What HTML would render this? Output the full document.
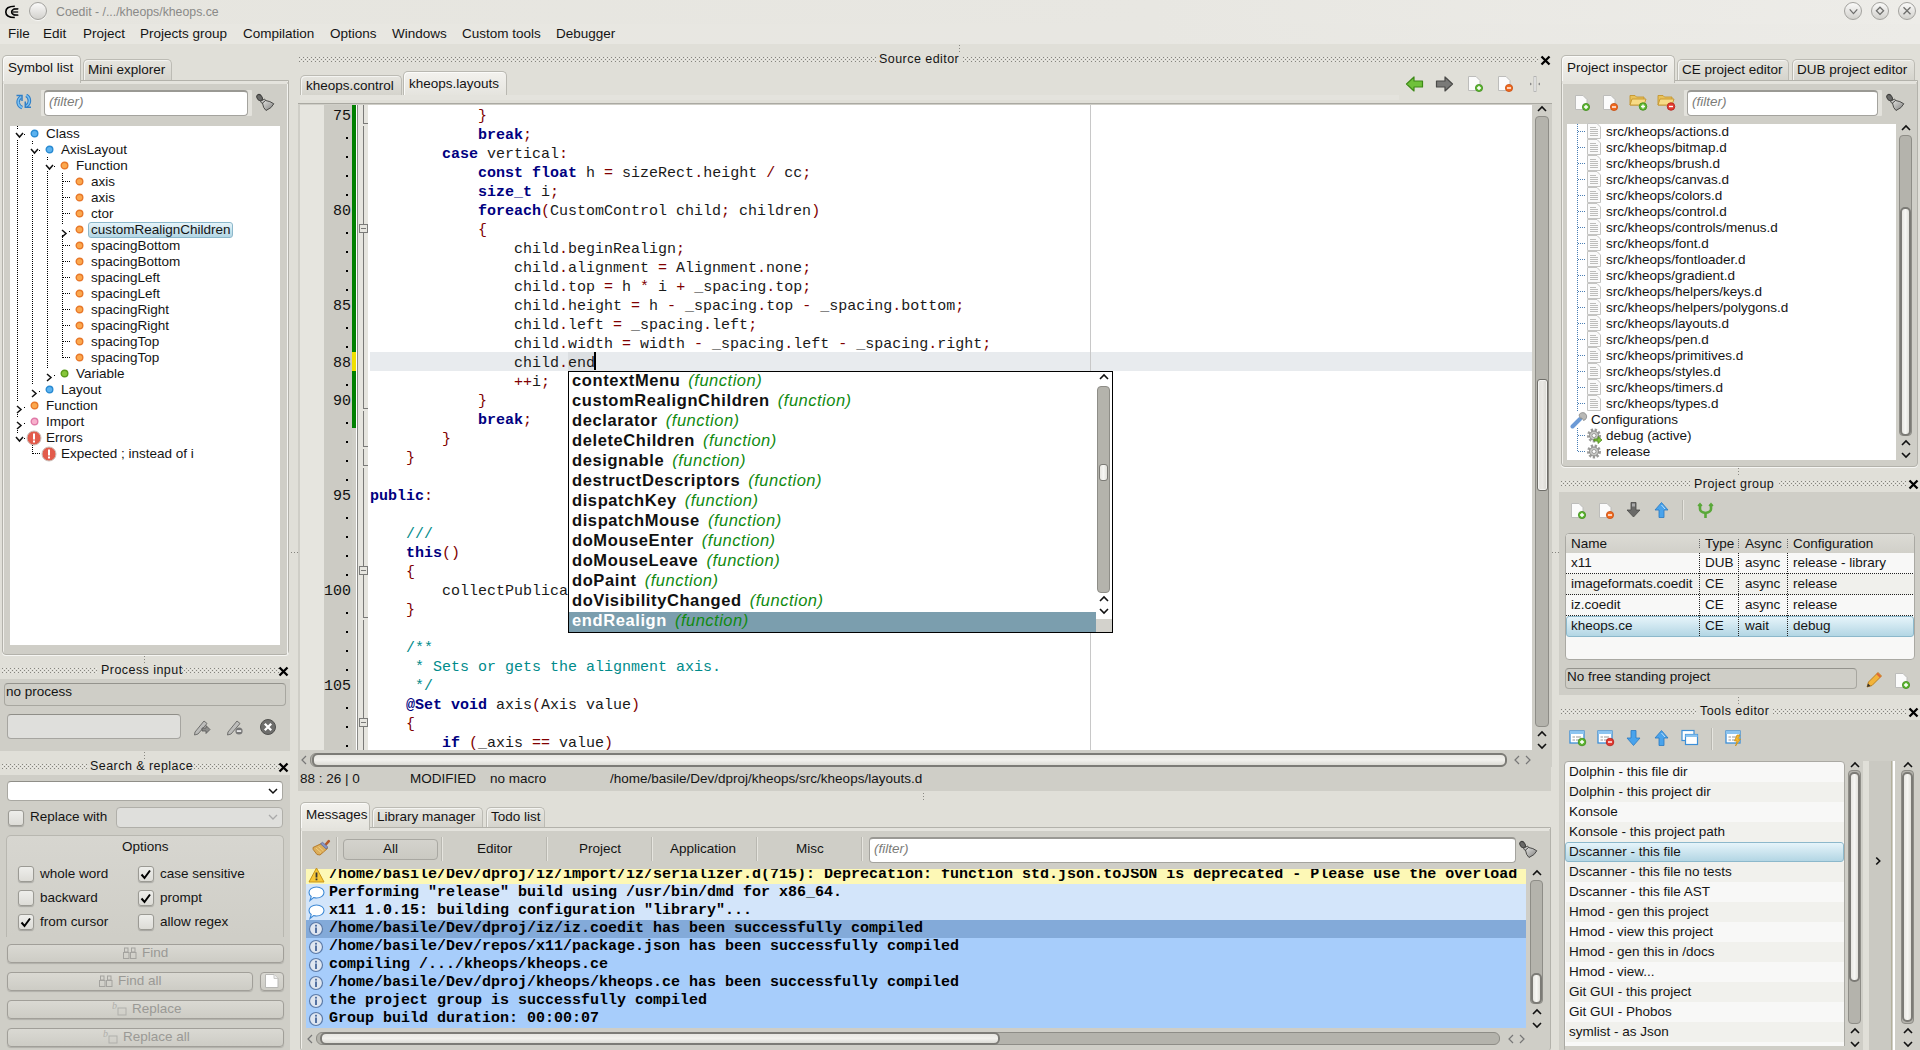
<!DOCTYPE html><html><head><meta charset="utf-8"><style>
html,body{margin:0;padding:0}
body{width:1920px;height:1050px;overflow:hidden;position:relative;background:#e0dfd8;font-family:"Liberation Sans",sans-serif;font-size:13.5px;color:#141414}
.m{font-family:"Liberation Mono",monospace}
</style></head><body>
<svg width="0" height="0" style="position:absolute"><defs>
<pattern id="dotpat" width="4" height="4" patternUnits="userSpaceOnUse"><rect x="0" y="0" width="1" height="1" fill="#8d8c86"/><rect x="1" y="1" width="1" height="1" fill="#f3f3ef"/><rect x="2" y="2" width="1" height="1" fill="#8d8c86"/><rect x="3" y="3" width="1" height="1" fill="#f3f3ef"/></pattern>
</defs></svg>

<div style="position:absolute;left:0px;top:0px;width:1920px;height:24px;background:linear-gradient(90deg,#e6e5df,#e8e7e2 60%,#edece8)"></div>
<div style="position:absolute;left:0px;top:24px;width:1920px;height:20px;background:linear-gradient(90deg,#e8e7e1,#e8e7e2 60%,#ecebe7)"></div>
<div style="position:absolute;left:56px;top:5px;white-space:pre;font-size:12.3px;line-height:15px;color:#8a8a88;">Coedit - /.../kheops/kheops.ce</div>
<svg style="position:absolute;left:0px;top:0px" width="24" height="24"><path d="M14.8 6.3 C7 6.3 5.8 9 5.8 11.9 C5.8 14.8 7 17.5 14.8 17.5" fill="none" stroke="#000" stroke-width="1.6"/><path d="M18.2 8.8 C12.5 8.8 11.6 10.2 11.6 12 C11.6 13.8 12.5 15.2 18.2 15.2" fill="none" stroke="#000" stroke-width="1.5"/><path d="M13.5 8.8 H18.2 M12 12 H18.2 M13.5 15.2 H18.2" stroke="#2a2a2a" stroke-width="1.4"/></svg>
<div style="position:absolute;left:29px;top:2px;width:16px;height:16px;border-radius:50%;background:linear-gradient(#fafaf9,#d2d1cd);border:1px solid #a3a29e;box-shadow:0 1px 1px rgba(255,255,255,.8)"></div>
<div style="position:absolute;left:1844px;top:2px;width:16px;height:16px;border-radius:50%;background:linear-gradient(#fafaf9,#d2d1cd);border:1px solid #a3a29e"></div>
<div style="position:absolute;left:1871px;top:2px;width:16px;height:16px;border-radius:50%;background:linear-gradient(#fafaf9,#d2d1cd);border:1px solid #a3a29e"></div>
<div style="position:absolute;left:1898px;top:2px;width:16px;height:16px;border-radius:50%;background:linear-gradient(#fafaf9,#d2d1cd);border:1px solid #a3a29e"></div>
<svg style="position:absolute;left:1840px;top:0px" width="80" height="24"><path d="M9.7 9.4 L13.5 13.6 L17.3 9.4" fill="none" stroke="#6e6e6c" stroke-width="1.3"/><path d="M40 7.2 L43.6 10.8 L40 14.4 L36.4 10.8 Z" fill="none" stroke="#6e6e6c" stroke-width="1.3"/><path d="M63.5 7.3 L70.5 14.3 M70.5 7.3 L63.5 14.3" stroke="#6e6e6c" stroke-width="1.3"/></svg>
<div style="position:absolute;left:8px;top:25px;white-space:pre;font-size:13.5px;line-height:17px;color:#141414;">File</div>
<div style="position:absolute;left:43px;top:25px;white-space:pre;font-size:13.5px;line-height:17px;color:#141414;">Edit</div>
<div style="position:absolute;left:83px;top:25px;white-space:pre;font-size:13.5px;line-height:17px;color:#141414;">Project</div>
<div style="position:absolute;left:140px;top:25px;white-space:pre;font-size:13.5px;line-height:17px;color:#141414;">Projects group</div>
<div style="position:absolute;left:243px;top:25px;white-space:pre;font-size:13.5px;line-height:17px;color:#141414;">Compilation</div>
<div style="position:absolute;left:330px;top:25px;white-space:pre;font-size:13.5px;line-height:17px;color:#141414;">Options</div>
<div style="position:absolute;left:392px;top:25px;white-space:pre;font-size:13.5px;line-height:17px;color:#141414;">Windows</div>
<div style="position:absolute;left:462px;top:25px;white-space:pre;font-size:13.5px;line-height:17px;color:#141414;">Custom tools</div>
<div style="position:absolute;left:556px;top:25px;white-space:pre;font-size:13.5px;line-height:17px;color:#141414;">Debugger</div>
<div style="position:absolute;left:83px;top:59px;width:87px;height:22px;background:linear-gradient(#e6e5df,#d3d2cb);border:1px solid #bcbbb4;border-bottom:none;border-radius:5px 5px 0 0;box-shadow:inset 1px 1px 0 #f4f4f1"></div>
<div style="position:absolute;left:88px;top:61px;white-space:pre;font-size:13.5px;line-height:17px;color:#141414;">Mini explorer</div>
<div style="position:absolute;left:2px;top:80px;width:285px;height:573px;background:#cfcec7;border:1px solid #b3b2ab;border-radius:0 0 4px 4px;box-shadow:inset 1px 1px 0 #f0efea, 0 1px 0 #f6f6f3"></div>
<div style="position:absolute;left:3px;top:81px;width:284px;height:3px;background:#e4e3dd"></div>
<div style="position:absolute;left:2px;top:55px;width:77px;height:27px;background:linear-gradient(#f3f2ee,#e4e3dd);border:1px solid #b9b8b1;border-bottom:none;border-radius:5px 5px 0 0;box-shadow:inset 1px 1px 0 #fbfbf9"></div>
<div style="position:absolute;left:8px;top:59px;white-space:pre;font-size:13.5px;line-height:17px;color:#141414;">Symbol list</div>
<div style="position:absolute;left:3px;top:81px;width:77px;height:3px;background:#e4e3dd"></div>
<svg style="position:absolute;left:16px;top:94px" width="16" height="16"><g fill="none" stroke="#2f7fc8" stroke-width="3.6"><path d="M4.8 3.2 Q1.8 5 2.2 9 Q2.8 12.3 6.2 13.6"/><path d="M10.2 1.4 Q13.4 3 13.4 7 Q13.2 10.4 10.5 11.8"/></g><g fill="none" stroke="#7cc2f2" stroke-width="1.5"><path d="M4.8 3.2 Q1.8 5 2.2 9 Q2.8 12.3 6.2 13.6"/><path d="M10.2 1.4 Q13.4 3 13.4 7 Q13.2 10.4 10.5 11.8"/></g><path d="M0.5 1.5 H6 V7" fill="none" stroke="#2f7fc8" stroke-width="1.5"/><path d="M9.3 7.5 V13.2 H15" fill="none" stroke="#2f7fc8" stroke-width="1.5"/></svg>
<div style="position:absolute;left:41px;top:90px;width:211px;height:26px;background:#e3e2dc;border-radius:1px"></div>
<div style="position:absolute;left:44px;top:90px;width:202px;height:24px;background:#fff;border:1px solid #a4a39e;border-top:2px solid #9a9994;border-radius:4px;box-sizing:border-box;width:204px;height:26px"></div>
<div style="position:absolute;left:49px;top:93px;white-space:pre;font-size:13.5px;line-height:17px;color:#7c7c79;font-style:italic">(filter)</div>
<svg style="position:absolute;left:254px;top:90px" width="26" height="24"><defs><linearGradient id="bg254" x1="0" y1="0" x2="1" y2="1"><stop offset="0" stop-color="#e2e2e0"/><stop offset=".5" stop-color="#b0b0ae"/><stop offset="1" stop-color="#7a7a78"/></linearGradient></defs><ellipse cx="5.6" cy="7.6" rx="2.4" ry="3.4" transform="rotate(-35 5.6 7.6)" fill="#6a6a68" stroke="#3e3e3c" stroke-width="1"/><path d="M6.5 11.5 L10.5 9 L12 11 L8 13.5 Z" fill="#cfcfcd" stroke="#3e3e3c" stroke-width=".9"/><path d="M8.5 13 L11.5 10.5 Q16 11 19.8 13.8 Q18 18 12 20.5 Q9 18 8.5 13 Z" fill="url(#bg254)" stroke="#4a4a48" stroke-width="1"/></svg>
<div style="position:absolute;left:10px;top:126px;width:270px;height:519px;background:#fff"></div>
<div style="position:absolute;left:17px;top:126px;width:1px;height:312px;background:repeating-linear-gradient(#000 0 1px,transparent 1px 2px)"></div>
<div style="position:absolute;left:32px;top:141px;width:1px;height:249px;background:repeating-linear-gradient(#000 0 1px,transparent 1px 2px)"></div>
<div style="position:absolute;left:47px;top:157px;width:1px;height:217px;background:repeating-linear-gradient(#000 0 1px,transparent 1px 2px)"></div>
<div style="position:absolute;left:62px;top:173px;width:1px;height:185px;background:repeating-linear-gradient(#000 0 1px,transparent 1px 2px)"></div>
<div style="position:absolute;left:32px;top:445px;width:1px;height:9px;background:repeating-linear-gradient(#000 0 1px,transparent 1px 2px)"></div>
<div style="position:absolute;left:15px;top:129px;width:10px;height:10px;background:#fff"></div>
<svg style="position:absolute;left:15px;top:132px" width="9" height="7"><path d="M1 1 L4.5 5 L8 1" fill="none" stroke="#111" stroke-width="1.5"/></svg>
<div style="position:absolute;left:24px;top:134px;width:1px;height:1px;background:#000"></div>
<svg style="position:absolute;left:30px;top:129px" width="10" height="10"><circle cx="4.5" cy="4.5" r="3.3" fill="#5cb2ef" stroke="#2a8bd2" stroke-width="1.4"/></svg>
<div style="position:absolute;left:46px;top:125px;white-space:pre;font-size:13.5px;line-height:17px;color:#141414;">Class</div>
<div style="position:absolute;left:30px;top:145px;width:10px;height:10px;background:#fff"></div>
<svg style="position:absolute;left:30px;top:148px" width="9" height="7"><path d="M1 1 L4.5 5 L8 1" fill="none" stroke="#111" stroke-width="1.5"/></svg>
<div style="position:absolute;left:39px;top:150px;width:1px;height:1px;background:#000"></div>
<svg style="position:absolute;left:45px;top:145px" width="10" height="10"><circle cx="4.5" cy="4.5" r="3.3" fill="#5cb2ef" stroke="#2a8bd2" stroke-width="1.4"/></svg>
<div style="position:absolute;left:61px;top:141px;white-space:pre;font-size:13.5px;line-height:17px;color:#141414;">AxisLayout</div>
<div style="position:absolute;left:45px;top:161px;width:10px;height:10px;background:#fff"></div>
<svg style="position:absolute;left:45px;top:164px" width="9" height="7"><path d="M1 1 L4.5 5 L8 1" fill="none" stroke="#111" stroke-width="1.5"/></svg>
<div style="position:absolute;left:54px;top:166px;width:1px;height:1px;background:#000"></div>
<svg style="position:absolute;left:60px;top:161px" width="10" height="10"><circle cx="4.5" cy="4.5" r="3.3" fill="#fba84e" stroke="#e8782a" stroke-width="1.4"/></svg>
<div style="position:absolute;left:76px;top:157px;white-space:pre;font-size:13.5px;line-height:17px;color:#141414;">Function</div>
<div style="position:absolute;left:63px;top:181px;width:8px;height:1px;background:repeating-linear-gradient(90deg,#000 0 1px,transparent 1px 2px)"></div>
<svg style="position:absolute;left:75px;top:177px" width="10" height="10"><circle cx="4.5" cy="4.5" r="3.3" fill="#fba84e" stroke="#e8782a" stroke-width="1.4"/></svg>
<div style="position:absolute;left:91px;top:173px;white-space:pre;font-size:13.5px;line-height:17px;color:#141414;">axis</div>
<div style="position:absolute;left:63px;top:197px;width:8px;height:1px;background:repeating-linear-gradient(90deg,#000 0 1px,transparent 1px 2px)"></div>
<svg style="position:absolute;left:75px;top:193px" width="10" height="10"><circle cx="4.5" cy="4.5" r="3.3" fill="#fba84e" stroke="#e8782a" stroke-width="1.4"/></svg>
<div style="position:absolute;left:91px;top:189px;white-space:pre;font-size:13.5px;line-height:17px;color:#141414;">axis</div>
<div style="position:absolute;left:63px;top:213px;width:8px;height:1px;background:repeating-linear-gradient(90deg,#000 0 1px,transparent 1px 2px)"></div>
<svg style="position:absolute;left:75px;top:209px" width="10" height="10"><circle cx="4.5" cy="4.5" r="3.3" fill="#fba84e" stroke="#e8782a" stroke-width="1.4"/></svg>
<div style="position:absolute;left:91px;top:205px;white-space:pre;font-size:13.5px;line-height:17px;color:#141414;">ctor</div>
<div style="position:absolute;left:60px;top:225px;width:10px;height:10px;background:#fff"></div>
<svg style="position:absolute;left:61px;top:229px" width="7" height="9"><path d="M1 1 L5 4.5 L1 8" fill="none" stroke="#111" stroke-width="1.5"/></svg>
<div style="position:absolute;left:69px;top:231px;width:1px;height:1px;background:#000"></div>
<svg style="position:absolute;left:75px;top:225px" width="10" height="10"><circle cx="4.5" cy="4.5" r="3.3" fill="#fba84e" stroke="#e8782a" stroke-width="1.4"/></svg>
<div style="position:absolute;left:88px;top:222px;width:145px;height:16px;background:linear-gradient(#e6f4fa,#b3d6e4);border:1px solid #8cb8cb;border-radius:3px;box-sizing:border-box"></div>
<div style="position:absolute;left:91px;top:221px;white-space:pre;font-size:13.5px;line-height:17px;color:#141414;">customRealignChildren</div>
<div style="position:absolute;left:63px;top:245px;width:8px;height:1px;background:repeating-linear-gradient(90deg,#000 0 1px,transparent 1px 2px)"></div>
<svg style="position:absolute;left:75px;top:241px" width="10" height="10"><circle cx="4.5" cy="4.5" r="3.3" fill="#fba84e" stroke="#e8782a" stroke-width="1.4"/></svg>
<div style="position:absolute;left:91px;top:237px;white-space:pre;font-size:13.5px;line-height:17px;color:#141414;">spacingBottom</div>
<div style="position:absolute;left:63px;top:261px;width:8px;height:1px;background:repeating-linear-gradient(90deg,#000 0 1px,transparent 1px 2px)"></div>
<svg style="position:absolute;left:75px;top:257px" width="10" height="10"><circle cx="4.5" cy="4.5" r="3.3" fill="#fba84e" stroke="#e8782a" stroke-width="1.4"/></svg>
<div style="position:absolute;left:91px;top:253px;white-space:pre;font-size:13.5px;line-height:17px;color:#141414;">spacingBottom</div>
<div style="position:absolute;left:63px;top:277px;width:8px;height:1px;background:repeating-linear-gradient(90deg,#000 0 1px,transparent 1px 2px)"></div>
<svg style="position:absolute;left:75px;top:273px" width="10" height="10"><circle cx="4.5" cy="4.5" r="3.3" fill="#fba84e" stroke="#e8782a" stroke-width="1.4"/></svg>
<div style="position:absolute;left:91px;top:269px;white-space:pre;font-size:13.5px;line-height:17px;color:#141414;">spacingLeft</div>
<div style="position:absolute;left:63px;top:293px;width:8px;height:1px;background:repeating-linear-gradient(90deg,#000 0 1px,transparent 1px 2px)"></div>
<svg style="position:absolute;left:75px;top:289px" width="10" height="10"><circle cx="4.5" cy="4.5" r="3.3" fill="#fba84e" stroke="#e8782a" stroke-width="1.4"/></svg>
<div style="position:absolute;left:91px;top:285px;white-space:pre;font-size:13.5px;line-height:17px;color:#141414;">spacingLeft</div>
<div style="position:absolute;left:63px;top:309px;width:8px;height:1px;background:repeating-linear-gradient(90deg,#000 0 1px,transparent 1px 2px)"></div>
<svg style="position:absolute;left:75px;top:305px" width="10" height="10"><circle cx="4.5" cy="4.5" r="3.3" fill="#fba84e" stroke="#e8782a" stroke-width="1.4"/></svg>
<div style="position:absolute;left:91px;top:301px;white-space:pre;font-size:13.5px;line-height:17px;color:#141414;">spacingRight</div>
<div style="position:absolute;left:63px;top:325px;width:8px;height:1px;background:repeating-linear-gradient(90deg,#000 0 1px,transparent 1px 2px)"></div>
<svg style="position:absolute;left:75px;top:321px" width="10" height="10"><circle cx="4.5" cy="4.5" r="3.3" fill="#fba84e" stroke="#e8782a" stroke-width="1.4"/></svg>
<div style="position:absolute;left:91px;top:317px;white-space:pre;font-size:13.5px;line-height:17px;color:#141414;">spacingRight</div>
<div style="position:absolute;left:63px;top:341px;width:8px;height:1px;background:repeating-linear-gradient(90deg,#000 0 1px,transparent 1px 2px)"></div>
<svg style="position:absolute;left:75px;top:337px" width="10" height="10"><circle cx="4.5" cy="4.5" r="3.3" fill="#fba84e" stroke="#e8782a" stroke-width="1.4"/></svg>
<div style="position:absolute;left:91px;top:333px;white-space:pre;font-size:13.5px;line-height:17px;color:#141414;">spacingTop</div>
<div style="position:absolute;left:63px;top:357px;width:8px;height:1px;background:repeating-linear-gradient(90deg,#000 0 1px,transparent 1px 2px)"></div>
<svg style="position:absolute;left:75px;top:353px" width="10" height="10"><circle cx="4.5" cy="4.5" r="3.3" fill="#fba84e" stroke="#e8782a" stroke-width="1.4"/></svg>
<div style="position:absolute;left:91px;top:349px;white-space:pre;font-size:13.5px;line-height:17px;color:#141414;">spacingTop</div>
<div style="position:absolute;left:45px;top:369px;width:10px;height:10px;background:#fff"></div>
<svg style="position:absolute;left:46px;top:373px" width="7" height="9"><path d="M1 1 L5 4.5 L1 8" fill="none" stroke="#111" stroke-width="1.5"/></svg>
<div style="position:absolute;left:54px;top:375px;width:1px;height:1px;background:#000"></div>
<svg style="position:absolute;left:60px;top:369px" width="10" height="10"><circle cx="4.5" cy="4.5" r="3.3" fill="#86c63a" stroke="#5a9a1c" stroke-width="1.4"/></svg>
<div style="position:absolute;left:76px;top:365px;white-space:pre;font-size:13.5px;line-height:17px;color:#141414;">Variable</div>
<div style="position:absolute;left:30px;top:385px;width:10px;height:10px;background:#fff"></div>
<svg style="position:absolute;left:31px;top:389px" width="7" height="9"><path d="M1 1 L5 4.5 L1 8" fill="none" stroke="#111" stroke-width="1.5"/></svg>
<div style="position:absolute;left:39px;top:391px;width:1px;height:1px;background:#000"></div>
<svg style="position:absolute;left:45px;top:385px" width="10" height="10"><circle cx="4.5" cy="4.5" r="3.3" fill="#5cb2ef" stroke="#2a8bd2" stroke-width="1.4"/></svg>
<div style="position:absolute;left:61px;top:381px;white-space:pre;font-size:13.5px;line-height:17px;color:#141414;">Layout</div>
<div style="position:absolute;left:15px;top:401px;width:10px;height:10px;background:#fff"></div>
<svg style="position:absolute;left:16px;top:405px" width="7" height="9"><path d="M1 1 L5 4.5 L1 8" fill="none" stroke="#111" stroke-width="1.5"/></svg>
<div style="position:absolute;left:24px;top:407px;width:1px;height:1px;background:#000"></div>
<svg style="position:absolute;left:30px;top:401px" width="10" height="10"><circle cx="4.5" cy="4.5" r="3.3" fill="#fba84e" stroke="#e8782a" stroke-width="1.4"/></svg>
<div style="position:absolute;left:46px;top:397px;white-space:pre;font-size:13.5px;line-height:17px;color:#141414;">Function</div>
<div style="position:absolute;left:15px;top:417px;width:10px;height:10px;background:#fff"></div>
<svg style="position:absolute;left:16px;top:421px" width="7" height="9"><path d="M1 1 L5 4.5 L1 8" fill="none" stroke="#111" stroke-width="1.5"/></svg>
<div style="position:absolute;left:24px;top:423px;width:1px;height:1px;background:#000"></div>
<svg style="position:absolute;left:30px;top:417px" width="10" height="10"><circle cx="4.5" cy="4.5" r="3.3" fill="#f7b0cc" stroke="#e07aa8" stroke-width="1.4"/></svg>
<div style="position:absolute;left:46px;top:413px;white-space:pre;font-size:13.5px;line-height:17px;color:#141414;">Import</div>
<div style="position:absolute;left:15px;top:433px;width:10px;height:10px;background:#fff"></div>
<svg style="position:absolute;left:15px;top:436px" width="9" height="7"><path d="M1 1 L4.5 5 L8 1" fill="none" stroke="#111" stroke-width="1.5"/></svg>
<div style="position:absolute;left:24px;top:438px;width:1px;height:1px;background:#000"></div>
<svg style="position:absolute;left:26px;top:430px" width="16" height="16"><circle cx="8" cy="8" r="7" fill="#e25b4b" stroke="#c9c2bd" stroke-width="1"/><rect x="7" y="3.5" width="2" height="6" fill="#fff"/><rect x="7" y="10.5" width="2" height="2" fill="#fff"/></svg>
<div style="position:absolute;left:46px;top:429px;white-space:pre;font-size:13.5px;line-height:17px;color:#141414;">Errors</div>
<div style="position:absolute;left:33px;top:453px;width:8px;height:1px;background:repeating-linear-gradient(90deg,#000 0 1px,transparent 1px 2px)"></div>
<svg style="position:absolute;left:41px;top:446px" width="16" height="16"><circle cx="8" cy="8" r="7" fill="#e25b4b" stroke="#c9c2bd" stroke-width="1"/><rect x="7" y="3.5" width="2" height="6" fill="#fff"/><rect x="7" y="10.5" width="2" height="2" fill="#fff"/></svg>
<div style="position:absolute;left:61px;top:445px;white-space:pre;font-size:13.5px;line-height:17px;color:#141414;">Expected ; instead of i</div>
<svg style="position:absolute;left:144px;top:656px" width="3" height="8"><rect x="0" y="0" width="1" height="1" fill="#8a8983"/><rect x="0" y="3" width="1" height="1" fill="#8a8983"/><rect x="0" y="6" width="1" height="1" fill="#8a8983"/></svg>
<svg style="position:absolute;left:2px;top:668px" width="277" height="6"><defs><pattern id="dp1" width="4" height="4" patternUnits="userSpaceOnUse"><rect x="0" y="0" width="1" height="1" fill="#85847e"/><rect x="2" y="0" width="1" height="1" fill="#eeede9"/><rect x="2" y="2" width="1" height="1" fill="#85847e"/><rect x="0" y="2" width="1" height="1" fill="#eeede9"/></pattern></defs><rect width="277" height="5" fill="url(#dp1)"/></svg>
<div style="position:absolute;left:98px;top:663px;width:83px;height:16px;background:#e0dfd8"></div>
<div style="position:absolute;left:101px;top:663px;white-space:pre;font-size:12.5px;line-height:15px;color:#141414;letter-spacing:0.45px">Process input</div>
<svg style="position:absolute;left:278px;top:666px" width="11" height="11"><path d="M1.5 1.5 L9.5 9.5 M9.5 1.5 L1.5 9.5" stroke="#000" stroke-width="2.3"/></svg>
<div style="position:absolute;left:0px;top:679px;width:290px;height:72px;background:#cfcec7"></div>
<div style="position:absolute;left:4px;top:683px;width:280px;height:21px;background:#cfcec7;border:1px solid #a8a7a0;border-top-color:#94938d;border-radius:4px"></div>
<div style="position:absolute;left:6px;top:683px;white-space:pre;font-size:13.5px;line-height:17px;color:#141414;">no process</div>
<div style="position:absolute;left:7px;top:714px;width:172px;height:23px;background:#dfdfdc;border:1px solid #a6a5a0;border-top-color:#8f8e88;border-radius:4px"></div>
<svg style="position:absolute;left:193px;top:718px" width="18" height="18"><path d="M2 14 L11 3 L14 5.5 L5 16 L1.5 17 Z" fill="#bdbdbb" stroke="#6f6f6d" stroke-width="1"/><path d="M9 10 H13 V7.5 L17 11.5 L13 15.5 V13 H9 Z" fill="#8b8b89" stroke="#555" stroke-width=".8"/></svg>
<svg style="position:absolute;left:226px;top:718px" width="18" height="18"><path d="M2 14 L11 3 L14 5.5 L5 16 L1.5 17 Z" fill="#bdbdbb" stroke="#6f6f6d" stroke-width="1"/><circle cx="13" cy="13" r="3.6" fill="#777"/><rect x="10.8" y="12.3" width="4.4" height="1.5" fill="#fff"/></svg>
<svg style="position:absolute;left:259px;top:718px" width="18" height="18"><circle cx="9" cy="9" r="7.5" fill="#6e6e6c" stroke="#4f4f4d"/><path d="M5.8 5.8 L12.2 12.2 M12.2 5.8 L5.8 12.2" stroke="#fff" stroke-width="2.3"/></svg>
<svg style="position:absolute;left:144px;top:752px" width="3" height="8"><rect x="0" y="0" width="1" height="1" fill="#8a8983"/><rect x="0" y="3" width="1" height="1" fill="#8a8983"/><rect x="0" y="6" width="1" height="1" fill="#8a8983"/></svg>
<svg style="position:absolute;left:2px;top:764px" width="277" height="6"><defs><pattern id="dp2" width="4" height="4" patternUnits="userSpaceOnUse"><rect x="0" y="0" width="1" height="1" fill="#85847e"/><rect x="2" y="0" width="1" height="1" fill="#eeede9"/><rect x="2" y="2" width="1" height="1" fill="#85847e"/><rect x="0" y="2" width="1" height="1" fill="#eeede9"/></pattern></defs><rect width="277" height="5" fill="url(#dp2)"/></svg>
<div style="position:absolute;left:87px;top:759px;width:105px;height:16px;background:#e0dfd8"></div>
<div style="position:absolute;left:90px;top:759px;white-space:pre;font-size:12.5px;line-height:15px;color:#141414;letter-spacing:0.45px">Search &amp; replace</div>
<svg style="position:absolute;left:278px;top:762px" width="11" height="11"><path d="M1.5 1.5 L9.5 9.5 M9.5 1.5 L1.5 9.5" stroke="#000" stroke-width="2.3"/></svg>
<div style="position:absolute;left:0px;top:775px;width:290px;height:275px;background:#cfcec7"></div>
<div style="position:absolute;left:7px;top:781px;width:274px;height:18px;background:#fff;border:1px solid #a9a8a2;border-top-color:#8f8e88;border-radius:4px"></div>
<svg style="position:absolute;left:265px;top:783px;overflow:visible" width="16" height="16"><g transform="translate(8 8)"><path d="M-4 -2.0 L0 2.0 L4 -2.0" fill="none" stroke="#111" stroke-width="1.5"/></g></svg>
<div style="position:absolute;left:8px;top:810px;width:14px;height:14px;background:linear-gradient(#eeeeeb,#dddcd7);border:1px solid #9b9a94;border-radius:3px;box-shadow:0 1px 1px rgba(0,0,0,.2)"></div>
<div style="position:absolute;left:30px;top:808px;white-space:pre;font-size:13.5px;line-height:17px;color:#141414;">Replace with</div>
<div style="position:absolute;left:116px;top:807px;width:165px;height:19px;background:#dfdfdc;border:1px solid #b0afa9;border-radius:4px"></div>
<svg style="position:absolute;left:265px;top:809px;overflow:visible" width="16" height="16"><g transform="translate(8 8)"><path d="M-4 -2.0 L0 2.0 L4 -2.0" fill="none" stroke="#aaa" stroke-width="1.3"/></g></svg>
<div style="position:absolute;left:6px;top:835px;width:276px;height:101px;background:linear-gradient(#d7d6d0,#cfcec7);border:1px solid #b8b7b0;border-bottom:none;border-radius:5px 5px 0 0"></div>
<div style="position:absolute;left:122px;top:838px;white-space:pre;font-size:13.5px;line-height:17px;color:#141414;">Options</div>
<div style="position:absolute;left:18px;top:866px;width:14px;height:14px;background:linear-gradient(#eeeeeb,#dddcd7);border:1px solid #9b9a94;border-radius:3px;box-shadow:0 1px 1px rgba(0,0,0,.2)"></div>
<div style="position:absolute;left:40px;top:865px;white-space:pre;font-size:13.5px;line-height:17px;color:#141414;">whole word</div>
<div style="position:absolute;left:138px;top:866px;width:14px;height:14px;background:linear-gradient(#eeeeeb,#dddcd7);border:1px solid #9b9a94;border-radius:3px;box-shadow:0 1px 1px rgba(0,0,0,.2)"></div>
<svg style="position:absolute;left:140px;top:869px" width="12" height="11"><path d="M1.5 5.5 L4.5 9 L10 1.5" fill="none" stroke="#000" stroke-width="2"/></svg>
<div style="position:absolute;left:160px;top:865px;white-space:pre;font-size:13.5px;line-height:17px;color:#141414;">case sensitive</div>
<div style="position:absolute;left:18px;top:890px;width:14px;height:14px;background:linear-gradient(#eeeeeb,#dddcd7);border:1px solid #9b9a94;border-radius:3px;box-shadow:0 1px 1px rgba(0,0,0,.2)"></div>
<div style="position:absolute;left:40px;top:889px;white-space:pre;font-size:13.5px;line-height:17px;color:#141414;">backward</div>
<div style="position:absolute;left:138px;top:890px;width:14px;height:14px;background:linear-gradient(#eeeeeb,#dddcd7);border:1px solid #9b9a94;border-radius:3px;box-shadow:0 1px 1px rgba(0,0,0,.2)"></div>
<svg style="position:absolute;left:140px;top:893px" width="12" height="11"><path d="M1.5 5.5 L4.5 9 L10 1.5" fill="none" stroke="#000" stroke-width="2"/></svg>
<div style="position:absolute;left:160px;top:889px;white-space:pre;font-size:13.5px;line-height:17px;color:#141414;">prompt</div>
<div style="position:absolute;left:18px;top:914px;width:14px;height:14px;background:linear-gradient(#eeeeeb,#dddcd7);border:1px solid #9b9a94;border-radius:3px;box-shadow:0 1px 1px rgba(0,0,0,.2)"></div>
<svg style="position:absolute;left:20px;top:917px" width="12" height="11"><path d="M1.5 5.5 L4.5 9 L10 1.5" fill="none" stroke="#000" stroke-width="2"/></svg>
<div style="position:absolute;left:40px;top:913px;white-space:pre;font-size:13.5px;line-height:17px;color:#141414;">from cursor</div>
<div style="position:absolute;left:138px;top:914px;width:14px;height:14px;background:linear-gradient(#eeeeeb,#dddcd7);border:1px solid #9b9a94;border-radius:3px;box-shadow:0 1px 1px rgba(0,0,0,.2)"></div>
<div style="position:absolute;left:160px;top:913px;white-space:pre;font-size:13.5px;line-height:17px;color:#141414;">allow regex</div>
<div style="position:absolute;left:7px;top:944px;width:275px;height:17px;background:linear-gradient(#dad9d3,#cdccc5);border:1px solid #a19f99;border-radius:4px;box-shadow:0 1px 1px rgba(0,0,0,.15)"></div>
<div style="position:absolute;left:142px;top:944px;white-space:pre;font-size:13.5px;line-height:17px;color:#9a9995;">Find</div>
<div style="position:absolute;left:7px;top:972px;width:244px;height:17px;background:linear-gradient(#dad9d3,#cdccc5);border:1px solid #a19f99;border-radius:4px;box-shadow:0 1px 1px rgba(0,0,0,.15)"></div>
<div style="position:absolute;left:118px;top:972px;white-space:pre;font-size:13.5px;line-height:17px;color:#9a9995;">Find all</div>
<div style="position:absolute;left:260px;top:972px;width:22px;height:17px;background:linear-gradient(#dad9d3,#cdccc5);border:1px solid #a19f99;border-radius:4px;box-shadow:0 1px 1px rgba(0,0,0,.15)"></div>
<svg style="position:absolute;left:264px;top:973px" width="16" height="16"><path d="M1.5 1.5 H10 L14 5.5 V14.5 H1.5 Z" fill="#fff" stroke="#b8b8b5"/><path d="M10 1.5 V5.5 H14" fill="#eee" stroke="#c8c8c5"/></svg>
<div style="position:absolute;left:7px;top:1000px;width:275px;height:17px;background:linear-gradient(#dad9d3,#cdccc5);border:1px solid #a19f99;border-radius:4px;box-shadow:0 1px 1px rgba(0,0,0,.15)"></div>
<div style="position:absolute;left:132px;top:1000px;white-space:pre;font-size:13.5px;line-height:17px;color:#9a9995;">Replace</div>
<div style="position:absolute;left:7px;top:1028px;width:275px;height:17px;background:linear-gradient(#dad9d3,#cdccc5);border:1px solid #a19f99;border-radius:4px;box-shadow:0 1px 1px rgba(0,0,0,.15)"></div>
<div style="position:absolute;left:123px;top:1028px;white-space:pre;font-size:13.5px;line-height:17px;color:#9a9995;">Replace all</div>
<svg style="position:absolute;left:123px;top:947px" width="14" height="12"><rect x=".5" y="5.5" width="5.5" height="6" fill="none" stroke="#a4a39f"/><rect x="7.5" y="5.5" width="5.5" height="6" fill="none" stroke="#a4a39f"/><rect x="1.5" y="1" width="3.5" height="4" fill="none" stroke="#a4a39f"/><rect x="8.5" y="1" width="3.5" height="4" fill="none" stroke="#a4a39f"/></svg>
<svg style="position:absolute;left:99px;top:975px" width="14" height="12"><rect x=".5" y="5.5" width="5.5" height="6" fill="none" stroke="#a4a39f"/><rect x="7.5" y="5.5" width="5.5" height="6" fill="none" stroke="#a4a39f"/><rect x="1.5" y="1" width="3.5" height="4" fill="none" stroke="#a4a39f"/><rect x="8.5" y="1" width="3.5" height="4" fill="none" stroke="#a4a39f"/></svg>
<svg style="position:absolute;left:112px;top:1001px" width="16" height="16"><text x="0" y="8" font-family="Liberation Serif" font-style="italic" font-size="10" fill="#b0afab">b</text><rect x="6" y="7" width="8" height="7" fill="none" stroke="#b0afab"/></svg>
<svg style="position:absolute;left:103px;top:1029px" width="16" height="16"><text x="0" y="8" font-family="Liberation Serif" font-style="italic" font-size="10" fill="#b0afab">b</text><rect x="6" y="7" width="8" height="7" fill="none" stroke="#b0afab"/></svg>
<svg style="position:absolute;left:959px;top:45px" width="3" height="8"><rect x="0" y="0" width="1" height="1" fill="#8a8983"/><rect x="0" y="3" width="1" height="1" fill="#8a8983"/><rect x="0" y="6" width="1" height="1" fill="#8a8983"/></svg>
<svg style="position:absolute;left:299px;top:57px" width="1239" height="6"><defs><pattern id="dp3" width="4" height="4" patternUnits="userSpaceOnUse"><rect x="0" y="0" width="1" height="1" fill="#85847e"/><rect x="2" y="0" width="1" height="1" fill="#eeede9"/><rect x="2" y="2" width="1" height="1" fill="#85847e"/><rect x="0" y="2" width="1" height="1" fill="#eeede9"/></pattern></defs><rect width="1239" height="5" fill="url(#dp3)"/></svg>
<div style="position:absolute;left:876px;top:52px;width:87px;height:16px;background:#e0dfd8"></div>
<div style="position:absolute;left:879px;top:52px;white-space:pre;font-size:12.5px;line-height:15px;color:#141414;letter-spacing:0.45px">Source editor</div>
<svg style="position:absolute;left:1540px;top:55px" width="11" height="11"><path d="M1.5 1.5 L9.5 9.5 M9.5 1.5 L1.5 9.5" stroke="#000" stroke-width="2.3"/></svg>
<div style="position:absolute;left:300px;top:75px;width:100px;height:21px;background:linear-gradient(#e6e5df,#d3d2cb);border:1px solid #bcbbb4;border-bottom:none;border-radius:5px 5px 0 0;box-shadow:inset 1px 1px 0 #f4f4f1"></div>
<div style="position:absolute;left:306px;top:77px;white-space:pre;font-size:13.5px;line-height:17px;color:#141414;">kheops.control</div>
<div style="position:absolute;left:403px;top:71px;width:102px;height:25px;background:linear-gradient(#f3f2ee,#e4e3dd);border:1px solid #b9b8b1;border-bottom:none;border-radius:5px 5px 0 0;box-shadow:inset 1px 1px 0 #fbfbf9"></div>
<div style="position:absolute;left:409px;top:75px;white-space:pre;font-size:13.5px;line-height:17px;color:#141414;">kheops.layouts</div>
<div style="position:absolute;left:300px;top:95px;width:1099px;height:5px;background:#e4e3dd"></div>
<svg style="position:absolute;left:1405px;top:75px" width="20" height="18"><path d="M1.5 9 L9 2 V6 H17.5 V12 H9 V16 Z" fill="#6fc13a" stroke="#3d8a17" stroke-width="1.2" stroke-linejoin="round"/></svg>
<svg style="position:absolute;left:1434px;top:75px" width="20" height="18"><path d="M18.5 9 L11 2 V6 H2.5 V12 H11 V16 Z" fill="#7a7a78" stroke="#4a4a48" stroke-width="1.2" stroke-linejoin="round"/></svg>
<svg style="position:absolute;left:1467px;top:75px" width="17" height="17"><path d="M1.5 1.5 H9 L13 5.5 V15.5 H1.5 Z" fill="#fbfbfb" stroke="#bdbdbb" stroke-width="1"/><circle cx="12" cy="13" r="3.6" fill="#5fb832" stroke="#3e8a1c" stroke-width=".8"/><path d="M10 13 H14 M12 11 V15" stroke="#fff" stroke-width="1.4"/></svg>
<svg style="position:absolute;left:1497px;top:75px" width="17" height="17"><path d="M1.5 1.5 H9 L13 5.5 V15.5 H1.5 Z" fill="#fbfbfb" stroke="#bdbdbb" stroke-width="1"/><circle cx="12" cy="13" r="3.6" fill="#f06a1f" stroke="#c54d10" stroke-width=".8"/><path d="M10 13 H14" stroke="#fff" stroke-width="1.4"/></svg>
<svg style="position:absolute;left:1529px;top:75px" width="12" height="18"><rect x="5" y="1.5" width="2" height="15" fill="#fff" stroke="#aaa" stroke-width=".8"/><path d="M3 9 L1 7.5 V10.5 Z M9 9 L11 7.5 V10.5 Z" fill="#888"/></svg>
<div style="position:absolute;left:298px;top:103px;width:1254px;height:664px;background:#cfcec7;border-top:1px solid #aaa9a2;box-sizing:border-box"></div>
<div style="position:absolute;left:300px;top:105px;width:24px;height:645px;background:#e6e5df"></div>
<div style="position:absolute;left:324px;top:105px;width:28px;height:645px;background:#cccbc4"></div>
<div style="position:absolute;left:352px;top:105px;width:4px;height:247px;background:#008000"></div>
<div style="position:absolute;left:352px;top:352px;width:4px;height:19px;background:#f0e000"></div>
<div style="position:absolute;left:352px;top:371px;width:4px;height:57px;background:#008000"></div>
<div style="position:absolute;left:356px;top:105px;width:1px;height:645px;background:#fff"></div>
<div style="position:absolute;left:357px;top:105px;width:1px;height:645px;background:#8a8a87"></div>
<div style="position:absolute;left:358px;top:105px;width:10px;height:645px;background:#e6e5df"></div>
<div style="position:absolute;left:368px;top:105px;width:1164px;height:645px;background:#fff"></div>
<div style="position:absolute;left:370px;top:352px;width:1162px;height:19px;background:#e8ebee"></div>
<div style="position:absolute;left:568px;top:352px;width:26px;height:19px;background:#dcdfe2"></div>
<div style="position:absolute;left:1090px;top:105px;width:1px;height:645px;background:#c8c8c8"></div>
<div style="position:absolute;left:363px;top:105px;width:1px;height:18px;background:#7a7a78"></div>
<div style="position:absolute;left:363px;top:126px;width:1px;height:98px;background:#7a7a78"></div>
<div style="position:absolute;left:363px;top:233px;width:1px;height:175px;background:#7a7a78"></div>
<div style="position:absolute;left:363px;top:411px;width:1px;height:35px;background:#7a7a78"></div>
<div style="position:absolute;left:363px;top:449px;width:1px;height:16px;background:#7a7a78"></div>
<div style="position:absolute;left:363px;top:468px;width:1px;height:98px;background:#7a7a78"></div>
<div style="position:absolute;left:363px;top:575px;width:1px;height:42px;background:#7a7a78"></div>
<div style="position:absolute;left:363px;top:620px;width:1px;height:98px;background:#7a7a78"></div>
<div style="position:absolute;left:363px;top:727px;width:1px;height:23px;background:#7a7a78"></div>
<div style="position:absolute;left:363px;top:123px;width:5px;height:1px;background:#7a7a78"></div>
<div style="position:absolute;left:363px;top:408px;width:5px;height:1px;background:#7a7a78"></div>
<div style="position:absolute;left:363px;top:446px;width:5px;height:1px;background:#7a7a78"></div>
<div style="position:absolute;left:363px;top:465px;width:5px;height:1px;background:#7a7a78"></div>
<div style="position:absolute;left:363px;top:617px;width:5px;height:1px;background:#7a7a78"></div>
<div style="position:absolute;left:359px;top:224px;width:9px;height:9px;background:#e6e5df;border:1px solid #7a7a78;box-sizing:border-box"></div>
<div style="position:absolute;left:361px;top:228px;width:5px;height:1px;background:#7a7a78"></div>
<div style="position:absolute;left:359px;top:566px;width:9px;height:9px;background:#e6e5df;border:1px solid #7a7a78;box-sizing:border-box"></div>
<div style="position:absolute;left:361px;top:570px;width:5px;height:1px;background:#7a7a78"></div>
<div style="position:absolute;left:359px;top:718px;width:9px;height:9px;background:#e6e5df;border:1px solid #7a7a78;box-sizing:border-box"></div>
<div style="position:absolute;left:361px;top:722px;width:5px;height:1px;background:#7a7a78"></div>
<div class="m" style="position:absolute;left:370px;top:107px;width:1162px;height:643px;overflow:hidden;font-size:15px;line-height:19px;color:#1a1a1a;white-space:pre"><div style="height:19px">            <span style="color:#800000">}</span></div><div style="height:19px">            <b style="color:#000080">break</b><span style="color:#800000">;</span></div><div style="height:19px">        <b style="color:#000080">case</b> vertical<span style="color:#800000">:</span></div><div style="height:19px">            <b style="color:#000080">const</b> <b style="color:#000080">float</b> h <span style="color:#800000">=</span> sizeRect<span style="color:#800000">.</span>height <span style="color:#800000">/</span> cc<span style="color:#800000">;</span></div><div style="height:19px">            <b style="color:#000080">size_t</b> i<span style="color:#800000">;</span></div><div style="height:19px">            <b style="color:#000080">foreach</b><span style="color:#800000">(</span>CustomControl child<span style="color:#800000">;</span> children<span style="color:#800000">)</span></div><div style="height:19px">            <span style="color:#800000">{</span></div><div style="height:19px">                child<span style="color:#800000">.</span>beginRealign<span style="color:#800000">;</span></div><div style="height:19px">                child<span style="color:#800000">.</span>alignment <span style="color:#800000">=</span> Alignment<span style="color:#800000">.</span>none<span style="color:#800000">;</span></div><div style="height:19px">                child<span style="color:#800000">.</span>top <span style="color:#800000">=</span> h <span style="color:#800000">*</span> i <span style="color:#800000">+</span> _spacing<span style="color:#800000">.</span>top<span style="color:#800000">;</span></div><div style="height:19px">                child<span style="color:#800000">.</span>height <span style="color:#800000">=</span> h <span style="color:#800000">-</span> _spacing<span style="color:#800000">.</span>top <span style="color:#800000">-</span> _spacing<span style="color:#800000">.</span>bottom<span style="color:#800000">;</span></div><div style="height:19px">                child<span style="color:#800000">.</span>left <span style="color:#800000">=</span> _spacing<span style="color:#800000">.</span>left<span style="color:#800000">;</span></div><div style="height:19px">                child<span style="color:#800000">.</span>width <span style="color:#800000">=</span> width <span style="color:#800000">-</span> _spacing<span style="color:#800000">.</span>left <span style="color:#800000">-</span> _spacing<span style="color:#800000">.</span>right<span style="color:#800000">;</span></div><div style="height:19px">                child<span style="color:#800000">.</span>end</div><div style="height:19px">                <span style="color:#800000">++</span>i<span style="color:#800000">;</span></div><div style="height:19px">            <span style="color:#800000">}</span></div><div style="height:19px">            <b style="color:#000080">break</b><span style="color:#800000">;</span></div><div style="height:19px">        <span style="color:#800000">}</span></div><div style="height:19px">    <span style="color:#800000">}</span></div><div style="height:19px"></div><div style="height:19px"><b style="color:#000080">public</b><span style="color:#800000">:</span></div><div style="height:19px"></div><div style="height:19px"><span style="color:#008b8b">    ///</span></div><div style="height:19px">    <b style="color:#000080">this</b><span style="color:#800000">(</span><span style="color:#800000">)</span></div><div style="height:19px">    <span style="color:#800000">{</span></div><div style="height:19px">        collectPublications<span style="color:#800000">;</span></div><div style="height:19px">    <span style="color:#800000">}</span></div><div style="height:19px"></div><div style="height:19px"><span style="color:#008b8b">    /**</span></div><div style="height:19px"><span style="color:#008b8b">     * Sets or gets the alignment axis.</span></div><div style="height:19px"><span style="color:#008b8b">     */</span></div><div style="height:19px">    <b style="color:#000080">@Set</b> <b style="color:#000080">void</b> axis<span style="color:#800000">(</span>Axis value<span style="color:#800000">)</span></div><div style="height:19px">    <span style="color:#800000">{</span></div><div style="height:19px">        <b style="color:#000080">if</b> <span style="color:#800000">(</span>_axis <span style="color:#800000">==</span> value<span style="color:#800000">)</span></div></div>
<div style="position:absolute;left:594px;top:352px;width:2px;height:18px;background:#000"></div>
<div style="position:absolute;left:346px;top:137px;width:2px;height:2px;background:#000"></div>
<div style="position:absolute;left:346px;top:156px;width:2px;height:2px;background:#000"></div>
<div style="position:absolute;left:346px;top:175px;width:2px;height:2px;background:#000"></div>
<div style="position:absolute;left:346px;top:194px;width:2px;height:2px;background:#000"></div>
<div style="position:absolute;left:346px;top:232px;width:2px;height:2px;background:#000"></div>
<div style="position:absolute;left:346px;top:251px;width:2px;height:2px;background:#000"></div>
<div style="position:absolute;left:346px;top:270px;width:2px;height:2px;background:#000"></div>
<div style="position:absolute;left:346px;top:289px;width:2px;height:2px;background:#000"></div>
<div style="position:absolute;left:346px;top:327px;width:2px;height:2px;background:#000"></div>
<div style="position:absolute;left:346px;top:346px;width:2px;height:2px;background:#000"></div>
<div style="position:absolute;left:346px;top:384px;width:2px;height:2px;background:#000"></div>
<div style="position:absolute;left:346px;top:422px;width:2px;height:2px;background:#000"></div>
<div style="position:absolute;left:346px;top:441px;width:2px;height:2px;background:#000"></div>
<div style="position:absolute;left:346px;top:460px;width:2px;height:2px;background:#000"></div>
<div style="position:absolute;left:346px;top:479px;width:2px;height:2px;background:#000"></div>
<div style="position:absolute;left:346px;top:517px;width:2px;height:2px;background:#000"></div>
<div style="position:absolute;left:346px;top:536px;width:2px;height:2px;background:#000"></div>
<div style="position:absolute;left:346px;top:555px;width:2px;height:2px;background:#000"></div>
<div style="position:absolute;left:346px;top:574px;width:2px;height:2px;background:#000"></div>
<div style="position:absolute;left:346px;top:612px;width:2px;height:2px;background:#000"></div>
<div style="position:absolute;left:346px;top:631px;width:2px;height:2px;background:#000"></div>
<div style="position:absolute;left:346px;top:650px;width:2px;height:2px;background:#000"></div>
<div style="position:absolute;left:346px;top:669px;width:2px;height:2px;background:#000"></div>
<div style="position:absolute;left:346px;top:707px;width:2px;height:2px;background:#000"></div>
<div style="position:absolute;left:346px;top:726px;width:2px;height:2px;background:#000"></div>
<div style="position:absolute;left:346px;top:745px;width:2px;height:2px;background:#000"></div>
<div class="m" style="position:absolute;left:300px;top:107px;width:51px;height:643px;overflow:hidden;font-size:15px;line-height:19px;color:#111;white-space:pre"><div style="position:absolute;right:0px;width:60px"><div style="height:19px;text-align:right">75</div><div style="height:19px"></div><div style="height:19px"></div><div style="height:19px"></div><div style="height:19px"></div><div style="height:19px;text-align:right">80</div><div style="height:19px"></div><div style="height:19px"></div><div style="height:19px"></div><div style="height:19px"></div><div style="height:19px;text-align:right">85</div><div style="height:19px"></div><div style="height:19px"></div><div style="height:19px;text-align:right">88</div><div style="height:19px"></div><div style="height:19px;text-align:right">90</div><div style="height:19px"></div><div style="height:19px"></div><div style="height:19px"></div><div style="height:19px"></div><div style="height:19px;text-align:right">95</div><div style="height:19px"></div><div style="height:19px"></div><div style="height:19px"></div><div style="height:19px"></div><div style="height:19px;text-align:right">100</div><div style="height:19px"></div><div style="height:19px"></div><div style="height:19px"></div><div style="height:19px"></div><div style="height:19px;text-align:right">105</div><div style="height:19px"></div><div style="height:19px"></div><div style="height:19px"></div></div></div>
<svg style="position:absolute;left:1534.0px;top:101px;overflow:visible" width="16" height="16"><g transform="translate(8 8)"><path d="M-4 2.0 L0 -2.0 L4 2.0" fill="none" stroke="#111" stroke-width="1.6"/></g></svg>
<div style="position:absolute;left:1535px;top:116px;width:14px;height:611px;background:#b4b3ac;border:1px solid #8e8d87;border-radius:4px;box-sizing:border-box"></div>
<svg style="position:absolute;left:1534.0px;top:726px;overflow:visible" width="16" height="16"><g transform="translate(8 8)"><path d="M-4 2.0 L0 -2.0 L4 2.0" fill="none" stroke="#111" stroke-width="1.6"/></g></svg>
<svg style="position:absolute;left:1534.0px;top:738px;overflow:visible" width="16" height="16"><g transform="translate(8 8)"><path d="M-4 -2.0 L0 2.0 L4 -2.0" fill="none" stroke="#111" stroke-width="1.6"/></g></svg>
<div style="position:absolute;left:1537px;top:379px;width:11px;height:112px;background:linear-gradient(90deg,#e2e1dc,#e9e8e4 50%,#d9d8d2);border:1px solid #6f6e69;border-radius:3px;box-sizing:border-box;box-shadow:inset 0 0 0 1px #f3f3f0"></div>
<svg style="position:absolute;left:296px;top:752.0px;overflow:visible" width="16" height="16"><g transform="translate(8 8)"><path d="M2.0 -4 L-2.0 0 L2.0 4" fill="none" stroke="#777" stroke-width="1.2"/></g></svg>
<div style="position:absolute;left:310px;top:753px;width:1196px;height:14px;background:#b4b3ac;border:1px solid #8e8d87;border-radius:6px;box-sizing:border-box"></div>
<div style="position:absolute;left:312px;top:753px;width:1195px;height:14px;background:linear-gradient(#e8e7e2,#f2f1ed,#dcdbd5);border:2px solid #7c7b76;border-radius:6px;box-sizing:border-box"></div>
<svg style="position:absolute;left:1509px;top:752.0px;overflow:visible" width="16" height="16"><g transform="translate(8 8)"><path d="M2.0 -4 L-2.0 0 L2.0 4" fill="none" stroke="#777" stroke-width="1.2"/></g></svg>
<svg style="position:absolute;left:1520px;top:752.0px;overflow:visible" width="16" height="16"><g transform="translate(8 8)"><path d="M-2.0 -4 L2.0 0 L-2.0 4" fill="none" stroke="#777" stroke-width="1.2"/></g></svg>
<div style="position:absolute;left:298px;top:767px;width:1253px;height:24px;background:#cfcec7"></div>
<div style="position:absolute;left:300px;top:770px;white-space:pre;font-size:13.5px;line-height:17px;color:#141414;">88 : 26 | 0</div>
<div style="position:absolute;left:410px;top:770px;white-space:pre;font-size:13.5px;line-height:17px;color:#141414;">MODIFIED</div>
<div style="position:absolute;left:490px;top:770px;white-space:pre;font-size:13.5px;line-height:17px;color:#141414;">no macro</div>
<div style="position:absolute;left:610px;top:770px;white-space:pre;font-size:13.5px;line-height:17px;color:#141414;">/home/basile/Dev/dproj/kheops/src/kheops/layouts.d</div>
<div style="position:absolute;left:568px;top:371px;width:545px;height:262px;background:#fff;border:1px solid #000;box-sizing:border-box"></div>
<div style="position:absolute;left:569px;top:612px;width:527px;height:20px;background:#7b9eae"></div>
<div style="position:absolute;left:572px;top:370px;white-space:pre;font-size:16.5px;line-height:20px;color:#111"><b style="letter-spacing:0.6px">contextMenu</b><i style="color:#118a11;letter-spacing:0.5px;margin-left:8px">(function)</i></div>
<div style="position:absolute;left:572px;top:390px;white-space:pre;font-size:16.5px;line-height:20px;color:#111"><b style="letter-spacing:0.6px">customRealignChildren</b><i style="color:#118a11;letter-spacing:0.5px;margin-left:8px">(function)</i></div>
<div style="position:absolute;left:572px;top:410px;white-space:pre;font-size:16.5px;line-height:20px;color:#111"><b style="letter-spacing:0.6px">declarator</b><i style="color:#118a11;letter-spacing:0.5px;margin-left:8px">(function)</i></div>
<div style="position:absolute;left:572px;top:430px;white-space:pre;font-size:16.5px;line-height:20px;color:#111"><b style="letter-spacing:0.6px">deleteChildren</b><i style="color:#118a11;letter-spacing:0.5px;margin-left:8px">(function)</i></div>
<div style="position:absolute;left:572px;top:450px;white-space:pre;font-size:16.5px;line-height:20px;color:#111"><b style="letter-spacing:0.6px">designable</b><i style="color:#118a11;letter-spacing:0.5px;margin-left:8px">(function)</i></div>
<div style="position:absolute;left:572px;top:470px;white-space:pre;font-size:16.5px;line-height:20px;color:#111"><b style="letter-spacing:0.6px">destructDescriptors</b><i style="color:#118a11;letter-spacing:0.5px;margin-left:8px">(function)</i></div>
<div style="position:absolute;left:572px;top:490px;white-space:pre;font-size:16.5px;line-height:20px;color:#111"><b style="letter-spacing:0.6px">dispatchKey</b><i style="color:#118a11;letter-spacing:0.5px;margin-left:8px">(function)</i></div>
<div style="position:absolute;left:572px;top:510px;white-space:pre;font-size:16.5px;line-height:20px;color:#111"><b style="letter-spacing:0.6px">dispatchMouse</b><i style="color:#118a11;letter-spacing:0.5px;margin-left:8px">(function)</i></div>
<div style="position:absolute;left:572px;top:530px;white-space:pre;font-size:16.5px;line-height:20px;color:#111"><b style="letter-spacing:0.6px">doMouseEnter</b><i style="color:#118a11;letter-spacing:0.5px;margin-left:8px">(function)</i></div>
<div style="position:absolute;left:572px;top:550px;white-space:pre;font-size:16.5px;line-height:20px;color:#111"><b style="letter-spacing:0.6px">doMouseLeave</b><i style="color:#118a11;letter-spacing:0.5px;margin-left:8px">(function)</i></div>
<div style="position:absolute;left:572px;top:570px;white-space:pre;font-size:16.5px;line-height:20px;color:#111"><b style="letter-spacing:0.6px">doPaint</b><i style="color:#118a11;letter-spacing:0.5px;margin-left:8px">(function)</i></div>
<div style="position:absolute;left:572px;top:590px;white-space:pre;font-size:16.5px;line-height:20px;color:#111"><b style="letter-spacing:0.6px">doVisibilityChanged</b><i style="color:#118a11;letter-spacing:0.5px;margin-left:8px">(function)</i></div>
<div style="position:absolute;left:572px;top:610px;white-space:pre;font-size:16.5px;line-height:20px;color:#fff"><b style="letter-spacing:0.6px">endRealign</b><i style="color:#118a11;letter-spacing:0.5px;margin-left:8px">(function)</i></div>
<svg style="position:absolute;left:1095.5px;top:369px;overflow:visible" width="16" height="16"><g transform="translate(8 8)"><path d="M-4 2.0 L0 -2.0 L4 2.0" fill="none" stroke="#111" stroke-width="1.6"/></g></svg>
<div style="position:absolute;left:1097px;top:386px;width:13px;height:207px;background:#b4b3ac;border:1px solid #8e8d87;border-radius:4px;box-sizing:border-box"></div>
<svg style="position:absolute;left:1095.5px;top:591px;overflow:visible" width="16" height="16"><g transform="translate(8 8)"><path d="M-4 2.0 L0 -2.0 L4 2.0" fill="none" stroke="#111" stroke-width="1.6"/></g></svg>
<svg style="position:absolute;left:1095.5px;top:603px;overflow:visible" width="16" height="16"><g transform="translate(8 8)"><path d="M-4 -2.0 L0 2.0 L4 -2.0" fill="none" stroke="#111" stroke-width="1.6"/></g></svg>
<div style="position:absolute;left:1099px;top:464px;width:9px;height:17px;background:linear-gradient(90deg,#e8e7e2,#f6f6f3,#e2e1db);border:1px solid #7c7b76;border-radius:3px;box-sizing:border-box"></div>
<div style="position:absolute;left:1096px;top:619px;width:16px;height:13px;background:#d3d2cc"></div>
<svg style="position:absolute;left:923px;top:793px" width="3" height="8"><rect x="0" y="0" width="1" height="1" fill="#8a8983"/><rect x="0" y="3" width="1" height="1" fill="#8a8983"/><rect x="0" y="6" width="1" height="1" fill="#8a8983"/></svg>
<div style="position:absolute;left:372px;top:807px;width:109px;height:21px;background:linear-gradient(#e6e5df,#d3d2cb);border:1px solid #bcbbb4;border-bottom:none;border-radius:5px 5px 0 0;box-shadow:inset 1px 1px 0 #f4f4f1"></div>
<div style="position:absolute;left:377px;top:808px;white-space:pre;font-size:13.5px;line-height:17px;color:#141414;">Library manager</div>
<div style="position:absolute;left:486px;top:807px;width:57px;height:21px;background:linear-gradient(#e6e5df,#d3d2cb);border:1px solid #bcbbb4;border-bottom:none;border-radius:5px 5px 0 0;box-shadow:inset 1px 1px 0 #f4f4f1"></div>
<div style="position:absolute;left:491px;top:808px;white-space:pre;font-size:13.5px;line-height:17px;color:#141414;">Todo list</div>
<div style="position:absolute;left:300px;top:827px;width:1249px;height:223px;background:#cfcec7;border:1px solid #b3b2ab;border-radius:0 0 4px 4px;box-shadow:inset 1px 1px 0 #f0efea, 0 1px 0 #f6f6f3"></div>
<div style="position:absolute;left:301px;top:828px;width:1248px;height:3px;background:#e4e3dd"></div>
<div style="position:absolute;left:300px;top:802px;width:68px;height:27px;background:linear-gradient(#f3f2ee,#e4e3dd);border:1px solid #b9b8b1;border-bottom:none;border-radius:5px 5px 0 0;box-shadow:inset 1px 1px 0 #fbfbf9"></div>
<div style="position:absolute;left:306px;top:806px;white-space:pre;font-size:13.5px;line-height:17px;color:#141414;">Messages</div>
<div style="position:absolute;left:301px;top:828px;width:68px;height:3px;background:#e4e3dd"></div>
<svg style="position:absolute;left:306px;top:834px" width="30" height="28"><path d="M22.8 7.2 L19.8 10.5" stroke="#b4592a" stroke-width="2.6" stroke-linecap="round"/><path d="M7 13.5 L15.5 9.5 L21.5 14.5 L14 21 L11 20.5 L7.2 15.5 Z" fill="#dcae5a" stroke="#b77d2c" stroke-width="1"/><path d="M10 14 L15 18.5 M12.5 12.5 L17.5 17" stroke="#f0cd80" stroke-width="1"/><path d="M14.5 9.8 L16.5 8.3 L21.8 13 L20.2 15 Z" fill="#8a95c2" stroke="#5e6a9a" stroke-width=".8"/></svg>
<div style="position:absolute;left:336px;top:837px;width:1px;height:24px;background:#b9b8b1;box-shadow:1px 0 0 #e6e5df"></div>
<div style="position:absolute;left:343px;top:839px;width:93px;height:19px;background:linear-gradient(#d4d3cd,#cac9c2);border:1px solid #a9a8a2;border-radius:4px"></div>
<div style="position:absolute;left:383px;top:840px;white-space:pre;font-size:13.5px;line-height:17px;color:#141414;">All</div>
<div style="position:absolute;left:441px;top:837px;width:1px;height:24px;background:#b9b8b1;box-shadow:1px 0 0 #e6e5df"></div>
<div style="position:absolute;left:546px;top:837px;width:1px;height:24px;background:#b9b8b1;box-shadow:1px 0 0 #e6e5df"></div>
<div style="position:absolute;left:651px;top:837px;width:1px;height:24px;background:#b9b8b1;box-shadow:1px 0 0 #e6e5df"></div>
<div style="position:absolute;left:756px;top:837px;width:1px;height:24px;background:#b9b8b1;box-shadow:1px 0 0 #e6e5df"></div>
<div style="position:absolute;left:861px;top:837px;width:1px;height:24px;background:#b9b8b1;box-shadow:1px 0 0 #e6e5df"></div>
<div style="position:absolute;left:477px;top:840px;white-space:pre;font-size:13.5px;line-height:17px;color:#141414;">Editor</div>
<div style="position:absolute;left:579px;top:840px;white-space:pre;font-size:13.5px;line-height:17px;color:#141414;">Project</div>
<div style="position:absolute;left:670px;top:840px;white-space:pre;font-size:13.5px;line-height:17px;color:#141414;">Application</div>
<div style="position:absolute;left:796px;top:840px;white-space:pre;font-size:13.5px;line-height:17px;color:#141414;">Misc</div>
<div style="position:absolute;left:869px;top:837px;width:645px;height:24px;background:#fff;border:1px solid #a4a39e;border-top:2px solid #9a9994;border-radius:4px;box-sizing:border-box;width:647px;height:26px"></div>
<div style="position:absolute;left:874px;top:840px;white-space:pre;font-size:13.5px;line-height:17px;color:#7c7c79;font-style:italic">(filter)</div>
<svg style="position:absolute;left:1517px;top:837px" width="26" height="24"><defs><linearGradient id="bg1517" x1="0" y1="0" x2="1" y2="1"><stop offset="0" stop-color="#e2e2e0"/><stop offset=".5" stop-color="#b0b0ae"/><stop offset="1" stop-color="#7a7a78"/></linearGradient></defs><ellipse cx="5.6" cy="7.6" rx="2.4" ry="3.4" transform="rotate(-35 5.6 7.6)" fill="#6a6a68" stroke="#3e3e3c" stroke-width="1"/><path d="M6.5 11.5 L10.5 9 L12 11 L8 13.5 Z" fill="#cfcfcd" stroke="#3e3e3c" stroke-width=".9"/><path d="M8.5 13 L11.5 10.5 Q16 11 19.8 13.8 Q18 18 12 20.5 Q9 18 8.5 13 Z" fill="url(#bg1517)" stroke="#4a4a48" stroke-width="1"/></svg>
<div style="position:absolute;left:306px;top:869px;width:1220px;height:159px;background:#a7cdfb"></div>
<div style="position:absolute;left:306px;top:869px;width:1220px;height:15px;background:#fdf8b6"></div>
<div style="position:absolute;left:306px;top:884px;width:1220px;height:36px;background:#d3e5fa"></div>
<div style="position:absolute;left:306px;top:920px;width:1220px;height:18px;background:#83aad9"></div>
<div class="m" style="position:absolute;left:329px;top:869px;width:1197px;height:159px;overflow:hidden;font-size:15px;line-height:18px;font-weight:bold;color:#000;white-space:pre"><div style="position:relative;top:-3px"><div style="height:18px">/home/basile/Dev/dproj/iz/import/iz/serializer.d(715): Deprecation: function std.json.toJSON is deprecated - Please use the overload</div><div style="height:18px">Performing &quot;release&quot; build using /usr/bin/dmd for x86_64.</div><div style="height:18px">x11 1.0.15: building configuration &quot;library&quot;...</div><div style="height:18px">/home/basile/Dev/dproj/iz/iz.coedit has been successfully compiled</div><div style="height:18px">/home/basile/Dev/repos/x11/package.json has been successfully compiled</div><div style="height:18px">compiling /.../kheops/kheops.ce</div><div style="height:18px">/home/basile/Dev/dproj/kheops/kheops.ce has been successfully compiled</div><div style="height:18px">the project group is successfully compiled</div><div style="height:18px">Group build duration: 00:00:07</div></div></div>
<svg style="position:absolute;left:308px;top:867px" width="17" height="16"><path d="M8.5 1 L16 15 H1 Z" fill="#f7c83a" stroke="#c89416" stroke-width="1"/><rect x="7.6" y="5.5" width="1.8" height="5" fill="#333"/><rect x="7.6" y="11.5" width="1.8" height="1.8" fill="#333"/></svg>
<svg style="position:absolute;left:308px;top:885px" width="17" height="17"><path d="M8.5 2 C13 2 16 4.5 16 7.5 C16 10.5 13 13 8.5 13 C7.5 13 6.5 12.8 5.6 12.5 L2 15.5 L3.2 11.5 C1.8 10.5 1 9 1 7.5 C1 4.5 4 2 8.5 2 Z" fill="#fff" stroke="#3f8ad6" stroke-width="1.1"/></svg>
<svg style="position:absolute;left:308px;top:903px" width="17" height="17"><path d="M8.5 2 C13 2 16 4.5 16 7.5 C16 10.5 13 13 8.5 13 C7.5 13 6.5 12.8 5.6 12.5 L2 15.5 L3.2 11.5 C1.8 10.5 1 9 1 7.5 C1 4.5 4 2 8.5 2 Z" fill="#fff" stroke="#3f8ad6" stroke-width="1.1"/></svg>
<svg style="position:absolute;left:308px;top:921px" width="16" height="16"><circle cx="8" cy="8" r="6.5" fill="#dfe6f0" stroke="#5b7aa8" stroke-width="1.2"/><rect x="7.1" y="6.5" width="1.8" height="5.5" fill="#46659a"/><rect x="7.1" y="3.8" width="1.8" height="1.8" fill="#46659a"/></svg>
<svg style="position:absolute;left:308px;top:939px" width="16" height="16"><circle cx="8" cy="8" r="6.5" fill="#dfe6f0" stroke="#5b7aa8" stroke-width="1.2"/><rect x="7.1" y="6.5" width="1.8" height="5.5" fill="#46659a"/><rect x="7.1" y="3.8" width="1.8" height="1.8" fill="#46659a"/></svg>
<svg style="position:absolute;left:308px;top:957px" width="16" height="16"><circle cx="8" cy="8" r="6.5" fill="#dfe6f0" stroke="#5b7aa8" stroke-width="1.2"/><rect x="7.1" y="6.5" width="1.8" height="5.5" fill="#46659a"/><rect x="7.1" y="3.8" width="1.8" height="1.8" fill="#46659a"/></svg>
<svg style="position:absolute;left:308px;top:975px" width="16" height="16"><circle cx="8" cy="8" r="6.5" fill="#dfe6f0" stroke="#5b7aa8" stroke-width="1.2"/><rect x="7.1" y="6.5" width="1.8" height="5.5" fill="#46659a"/><rect x="7.1" y="3.8" width="1.8" height="1.8" fill="#46659a"/></svg>
<svg style="position:absolute;left:308px;top:993px" width="16" height="16"><circle cx="8" cy="8" r="6.5" fill="#dfe6f0" stroke="#5b7aa8" stroke-width="1.2"/><rect x="7.1" y="6.5" width="1.8" height="5.5" fill="#46659a"/><rect x="7.1" y="3.8" width="1.8" height="1.8" fill="#46659a"/></svg>
<svg style="position:absolute;left:308px;top:1011px" width="16" height="16"><circle cx="8" cy="8" r="6.5" fill="#dfe6f0" stroke="#5b7aa8" stroke-width="1.2"/><rect x="7.1" y="6.5" width="1.8" height="5.5" fill="#46659a"/><rect x="7.1" y="3.8" width="1.8" height="1.8" fill="#46659a"/></svg>
<svg style="position:absolute;left:1528.5px;top:865px;overflow:visible" width="16" height="16"><g transform="translate(8 8)"><path d="M-4 2.0 L0 -2.0 L4 2.0" fill="none" stroke="#111" stroke-width="1.6"/></g></svg>
<div style="position:absolute;left:1530px;top:880px;width:13px;height:124px;background:#b4b3ac;border:1px solid #8e8d87;border-radius:4px;box-sizing:border-box"></div>
<svg style="position:absolute;left:1528.5px;top:1004px;overflow:visible" width="16" height="16"><g transform="translate(8 8)"><path d="M-4 2.0 L0 -2.0 L4 2.0" fill="none" stroke="#111" stroke-width="1.6"/></g></svg>
<svg style="position:absolute;left:1528.5px;top:1017px;overflow:visible" width="16" height="16"><g transform="translate(8 8)"><path d="M-4 -2.0 L0 2.0 L4 -2.0" fill="none" stroke="#111" stroke-width="1.6"/></g></svg>
<div style="position:absolute;left:1531px;top:973px;width:11px;height:31px;background:linear-gradient(90deg,#e8e7e2,#f6f6f3,#e2e1db);border:2px solid #7c7b76;border-radius:5px;box-sizing:border-box"></div>
<svg style="position:absolute;left:302px;top:1030.5px;overflow:visible" width="16" height="16"><g transform="translate(8 8)"><path d="M2.0 -4 L-2.0 0 L2.0 4" fill="none" stroke="#777" stroke-width="1.2"/></g></svg>
<div style="position:absolute;left:316px;top:1032px;width:1184px;height:13px;background:#b4b3ac;border:1px solid #8e8d87;border-radius:6px;box-sizing:border-box"></div>
<div style="position:absolute;left:320px;top:1032px;width:680px;height:13px;background:linear-gradient(#e8e7e2,#f2f1ed,#dcdbd5);border:2px solid #7c7b76;border-radius:6px;box-sizing:border-box"></div>
<svg style="position:absolute;left:1503px;top:1030.5px;overflow:visible" width="16" height="16"><g transform="translate(8 8)"><path d="M2.0 -4 L-2.0 0 L2.0 4" fill="none" stroke="#777" stroke-width="1.2"/></g></svg>
<svg style="position:absolute;left:1514px;top:1030.5px;overflow:visible" width="16" height="16"><g transform="translate(8 8)"><path d="M-2.0 -4 L2.0 0 L-2.0 4" fill="none" stroke="#777" stroke-width="1.2"/></g></svg>
<div style="position:absolute;left:1677px;top:59px;width:110px;height:22px;background:linear-gradient(#e6e5df,#d3d2cb);border:1px solid #bcbbb4;border-bottom:none;border-radius:5px 5px 0 0;box-shadow:inset 1px 1px 0 #f4f4f1"></div>
<div style="position:absolute;left:1682px;top:61px;white-space:pre;font-size:13.5px;line-height:17px;color:#141414;">CE project editor</div>
<div style="position:absolute;left:1792px;top:59px;width:121px;height:22px;background:linear-gradient(#e6e5df,#d3d2cb);border:1px solid #bcbbb4;border-bottom:none;border-radius:5px 5px 0 0;box-shadow:inset 1px 1px 0 #f4f4f1"></div>
<div style="position:absolute;left:1797px;top:61px;white-space:pre;font-size:13.5px;line-height:17px;color:#141414;">DUB project editor</div>
<div style="position:absolute;left:1561px;top:80px;width:355px;height:385px;background:#cfcec7;border:1px solid #b3b2ab;border-radius:0 0 4px 4px;box-shadow:inset 1px 1px 0 #f0efea, 0 1px 0 #f6f6f3"></div>
<div style="position:absolute;left:1562px;top:81px;width:354px;height:3px;background:#e4e3dd"></div>
<div style="position:absolute;left:1561px;top:55px;width:112px;height:27px;background:linear-gradient(#f3f2ee,#e4e3dd);border:1px solid #b9b8b1;border-bottom:none;border-radius:5px 5px 0 0;box-shadow:inset 1px 1px 0 #fbfbf9"></div>
<div style="position:absolute;left:1567px;top:59px;white-space:pre;font-size:13.5px;line-height:17px;color:#141414;">Project inspector</div>
<div style="position:absolute;left:1562px;top:81px;width:112px;height:3px;background:#e4e3dd"></div>
<svg style="position:absolute;left:1574px;top:94px" width="17" height="17"><path d="M1.5 1.5 H9 L13 5.5 V15.5 H1.5 Z" fill="#fbfbfb" stroke="#bdbdbb" stroke-width="1"/><circle cx="12" cy="13" r="3.6" fill="#5fb832" stroke="#3e8a1c" stroke-width=".8"/><path d="M10 13 H14 M12 11 V15" stroke="#fff" stroke-width="1.4"/></svg>
<svg style="position:absolute;left:1602px;top:94px" width="17" height="17"><path d="M1.5 1.5 H9 L13 5.5 V15.5 H1.5 Z" fill="#fbfbfb" stroke="#bdbdbb" stroke-width="1"/><circle cx="12" cy="13" r="3.6" fill="#f06a1f" stroke="#c54d10" stroke-width=".8"/><path d="M10 13 H14" stroke="#fff" stroke-width="1.4"/></svg>
<svg style="position:absolute;left:1629px;top:93px" width="19" height="18"><path d="M1 2.5 H6 L7.5 4 H15 V12 H1 Z" fill="#e9c25a" stroke="#c49530" stroke-width=".9"/><path d="M1 12 L3 6 H17 L15 12 Z" fill="#f7db86" stroke="#c49530" stroke-width=".9"/><circle cx="14" cy="13.5" r="3.8" fill="#5fb832" stroke="#3e8a1c" stroke-width=".8"/><path d="M12 13.5 H16 M14 11.5 V15.5" stroke="#fff" stroke-width="1.4"/></svg>
<svg style="position:absolute;left:1657px;top:93px" width="19" height="18"><path d="M1 2.5 H6 L7.5 4 H15 V12 H1 Z" fill="#e9c25a" stroke="#c49530" stroke-width=".9"/><path d="M1 12 L3 6 H17 L15 12 Z" fill="#f7db86" stroke="#c49530" stroke-width=".9"/><circle cx="14" cy="13.5" r="3.8" fill="#e23b32" stroke="#b3211a" stroke-width=".8"/><path d="M12 13.5 H16" stroke="#fff" stroke-width="1.4"/></svg>
<div style="position:absolute;left:1684px;top:90px;width:198px;height:26px;background:#e3e2dc;border-radius:1px"></div>
<div style="position:absolute;left:1687px;top:90px;width:189px;height:24px;background:#fff;border:1px solid #a4a39e;border-top:2px solid #9a9994;border-radius:4px;box-sizing:border-box;width:191px;height:26px"></div>
<div style="position:absolute;left:1692px;top:93px;white-space:pre;font-size:13.5px;line-height:17px;color:#7c7c79;font-style:italic">(filter)</div>
<svg style="position:absolute;left:1884px;top:90px" width="26" height="24"><defs><linearGradient id="bg1884" x1="0" y1="0" x2="1" y2="1"><stop offset="0" stop-color="#e2e2e0"/><stop offset=".5" stop-color="#b0b0ae"/><stop offset="1" stop-color="#7a7a78"/></linearGradient></defs><ellipse cx="5.6" cy="7.6" rx="2.4" ry="3.4" transform="rotate(-35 5.6 7.6)" fill="#6a6a68" stroke="#3e3e3c" stroke-width="1"/><path d="M6.5 11.5 L10.5 9 L12 11 L8 13.5 Z" fill="#cfcfcd" stroke="#3e3e3c" stroke-width=".9"/><path d="M8.5 13 L11.5 10.5 Q16 11 19.8 13.8 Q18 18 12 20.5 Q9 18 8.5 13 Z" fill="url(#bg1884)" stroke="#4a4a48" stroke-width="1"/></svg>
<div style="position:absolute;left:1567px;top:124px;width:329px;height:336px;background:#fff"></div>
<svg style="position:absolute;left:1897.5px;top:120px;overflow:visible" width="16" height="16"><g transform="translate(8 8)"><path d="M-4 2.0 L0 -2.0 L4 2.0" fill="none" stroke="#111" stroke-width="1.6"/></g></svg>
<div style="position:absolute;left:1899px;top:135px;width:13px;height:301px;background:#b4b3ac;border:1px solid #8e8d87;border-radius:4px;box-sizing:border-box"></div>
<svg style="position:absolute;left:1897.5px;top:435px;overflow:visible" width="16" height="16"><g transform="translate(8 8)"><path d="M-4 2.0 L0 -2.0 L4 2.0" fill="none" stroke="#111" stroke-width="1.6"/></g></svg>
<svg style="position:absolute;left:1897.5px;top:447px;overflow:visible" width="16" height="16"><g transform="translate(8 8)"><path d="M-4 -2.0 L0 2.0 L4 -2.0" fill="none" stroke="#111" stroke-width="1.6"/></g></svg>
<div style="position:absolute;left:1900px;top:207px;width:11px;height:229px;background:linear-gradient(90deg,#e8e7e2,#f6f6f3,#e2e1db);border:2px solid #7c7b76;border-radius:5px;box-sizing:border-box"></div>
<div style="position:absolute;left:1577px;top:124px;width:1px;height:288px;background:repeating-linear-gradient(#4a7fb5 0 1px,transparent 1px 2px)"></div>
<div style="position:absolute;left:1578px;top:131px;width:8px;height:1px;background:repeating-linear-gradient(90deg,#4a7fb5 0 1px,transparent 1px 2px)"></div>
<svg style="position:absolute;left:1587px;top:123px" width="14" height="16"><path d="M.5 .5 H10 L13.5 4 V15.5 H.5 Z" fill="#fafafa" stroke="#c4c4c2"/><path d="M3 4.5 H9 M3 6.5 H11 M3 8.5 H11 M3 10.5 H11 M3 12.5 H11" stroke="#b5b5b3" stroke-width=".9"/></svg>
<div style="position:absolute;left:1606px;top:123px;white-space:pre;font-size:13.5px;line-height:17px;color:#141414;">src/kheops/actions.d</div>
<div style="position:absolute;left:1578px;top:147px;width:8px;height:1px;background:repeating-linear-gradient(90deg,#4a7fb5 0 1px,transparent 1px 2px)"></div>
<svg style="position:absolute;left:1587px;top:139px" width="14" height="16"><path d="M.5 .5 H10 L13.5 4 V15.5 H.5 Z" fill="#fafafa" stroke="#c4c4c2"/><path d="M3 4.5 H9 M3 6.5 H11 M3 8.5 H11 M3 10.5 H11 M3 12.5 H11" stroke="#b5b5b3" stroke-width=".9"/></svg>
<div style="position:absolute;left:1606px;top:139px;white-space:pre;font-size:13.5px;line-height:17px;color:#141414;">src/kheops/bitmap.d</div>
<div style="position:absolute;left:1578px;top:163px;width:8px;height:1px;background:repeating-linear-gradient(90deg,#4a7fb5 0 1px,transparent 1px 2px)"></div>
<svg style="position:absolute;left:1587px;top:155px" width="14" height="16"><path d="M.5 .5 H10 L13.5 4 V15.5 H.5 Z" fill="#fafafa" stroke="#c4c4c2"/><path d="M3 4.5 H9 M3 6.5 H11 M3 8.5 H11 M3 10.5 H11 M3 12.5 H11" stroke="#b5b5b3" stroke-width=".9"/></svg>
<div style="position:absolute;left:1606px;top:155px;white-space:pre;font-size:13.5px;line-height:17px;color:#141414;">src/kheops/brush.d</div>
<div style="position:absolute;left:1578px;top:179px;width:8px;height:1px;background:repeating-linear-gradient(90deg,#4a7fb5 0 1px,transparent 1px 2px)"></div>
<svg style="position:absolute;left:1587px;top:171px" width="14" height="16"><path d="M.5 .5 H10 L13.5 4 V15.5 H.5 Z" fill="#fafafa" stroke="#c4c4c2"/><path d="M3 4.5 H9 M3 6.5 H11 M3 8.5 H11 M3 10.5 H11 M3 12.5 H11" stroke="#b5b5b3" stroke-width=".9"/></svg>
<div style="position:absolute;left:1606px;top:171px;white-space:pre;font-size:13.5px;line-height:17px;color:#141414;">src/kheops/canvas.d</div>
<div style="position:absolute;left:1578px;top:195px;width:8px;height:1px;background:repeating-linear-gradient(90deg,#4a7fb5 0 1px,transparent 1px 2px)"></div>
<svg style="position:absolute;left:1587px;top:187px" width="14" height="16"><path d="M.5 .5 H10 L13.5 4 V15.5 H.5 Z" fill="#fafafa" stroke="#c4c4c2"/><path d="M3 4.5 H9 M3 6.5 H11 M3 8.5 H11 M3 10.5 H11 M3 12.5 H11" stroke="#b5b5b3" stroke-width=".9"/></svg>
<div style="position:absolute;left:1606px;top:187px;white-space:pre;font-size:13.5px;line-height:17px;color:#141414;">src/kheops/colors.d</div>
<div style="position:absolute;left:1578px;top:211px;width:8px;height:1px;background:repeating-linear-gradient(90deg,#4a7fb5 0 1px,transparent 1px 2px)"></div>
<svg style="position:absolute;left:1587px;top:203px" width="14" height="16"><path d="M.5 .5 H10 L13.5 4 V15.5 H.5 Z" fill="#fafafa" stroke="#c4c4c2"/><path d="M3 4.5 H9 M3 6.5 H11 M3 8.5 H11 M3 10.5 H11 M3 12.5 H11" stroke="#b5b5b3" stroke-width=".9"/></svg>
<div style="position:absolute;left:1606px;top:203px;white-space:pre;font-size:13.5px;line-height:17px;color:#141414;">src/kheops/control.d</div>
<div style="position:absolute;left:1578px;top:227px;width:8px;height:1px;background:repeating-linear-gradient(90deg,#4a7fb5 0 1px,transparent 1px 2px)"></div>
<svg style="position:absolute;left:1587px;top:219px" width="14" height="16"><path d="M.5 .5 H10 L13.5 4 V15.5 H.5 Z" fill="#fafafa" stroke="#c4c4c2"/><path d="M3 4.5 H9 M3 6.5 H11 M3 8.5 H11 M3 10.5 H11 M3 12.5 H11" stroke="#b5b5b3" stroke-width=".9"/></svg>
<div style="position:absolute;left:1606px;top:219px;white-space:pre;font-size:13.5px;line-height:17px;color:#141414;">src/kheops/controls/menus.d</div>
<div style="position:absolute;left:1578px;top:243px;width:8px;height:1px;background:repeating-linear-gradient(90deg,#4a7fb5 0 1px,transparent 1px 2px)"></div>
<svg style="position:absolute;left:1587px;top:235px" width="14" height="16"><path d="M.5 .5 H10 L13.5 4 V15.5 H.5 Z" fill="#fafafa" stroke="#c4c4c2"/><path d="M3 4.5 H9 M3 6.5 H11 M3 8.5 H11 M3 10.5 H11 M3 12.5 H11" stroke="#b5b5b3" stroke-width=".9"/></svg>
<div style="position:absolute;left:1606px;top:235px;white-space:pre;font-size:13.5px;line-height:17px;color:#141414;">src/kheops/font.d</div>
<div style="position:absolute;left:1578px;top:259px;width:8px;height:1px;background:repeating-linear-gradient(90deg,#4a7fb5 0 1px,transparent 1px 2px)"></div>
<svg style="position:absolute;left:1587px;top:251px" width="14" height="16"><path d="M.5 .5 H10 L13.5 4 V15.5 H.5 Z" fill="#fafafa" stroke="#c4c4c2"/><path d="M3 4.5 H9 M3 6.5 H11 M3 8.5 H11 M3 10.5 H11 M3 12.5 H11" stroke="#b5b5b3" stroke-width=".9"/></svg>
<div style="position:absolute;left:1606px;top:251px;white-space:pre;font-size:13.5px;line-height:17px;color:#141414;">src/kheops/fontloader.d</div>
<div style="position:absolute;left:1578px;top:275px;width:8px;height:1px;background:repeating-linear-gradient(90deg,#4a7fb5 0 1px,transparent 1px 2px)"></div>
<svg style="position:absolute;left:1587px;top:267px" width="14" height="16"><path d="M.5 .5 H10 L13.5 4 V15.5 H.5 Z" fill="#fafafa" stroke="#c4c4c2"/><path d="M3 4.5 H9 M3 6.5 H11 M3 8.5 H11 M3 10.5 H11 M3 12.5 H11" stroke="#b5b5b3" stroke-width=".9"/></svg>
<div style="position:absolute;left:1606px;top:267px;white-space:pre;font-size:13.5px;line-height:17px;color:#141414;">src/kheops/gradient.d</div>
<div style="position:absolute;left:1578px;top:291px;width:8px;height:1px;background:repeating-linear-gradient(90deg,#4a7fb5 0 1px,transparent 1px 2px)"></div>
<svg style="position:absolute;left:1587px;top:283px" width="14" height="16"><path d="M.5 .5 H10 L13.5 4 V15.5 H.5 Z" fill="#fafafa" stroke="#c4c4c2"/><path d="M3 4.5 H9 M3 6.5 H11 M3 8.5 H11 M3 10.5 H11 M3 12.5 H11" stroke="#b5b5b3" stroke-width=".9"/></svg>
<div style="position:absolute;left:1606px;top:283px;white-space:pre;font-size:13.5px;line-height:17px;color:#141414;">src/kheops/helpers/keys.d</div>
<div style="position:absolute;left:1578px;top:307px;width:8px;height:1px;background:repeating-linear-gradient(90deg,#4a7fb5 0 1px,transparent 1px 2px)"></div>
<svg style="position:absolute;left:1587px;top:299px" width="14" height="16"><path d="M.5 .5 H10 L13.5 4 V15.5 H.5 Z" fill="#fafafa" stroke="#c4c4c2"/><path d="M3 4.5 H9 M3 6.5 H11 M3 8.5 H11 M3 10.5 H11 M3 12.5 H11" stroke="#b5b5b3" stroke-width=".9"/></svg>
<div style="position:absolute;left:1606px;top:299px;white-space:pre;font-size:13.5px;line-height:17px;color:#141414;">src/kheops/helpers/polygons.d</div>
<div style="position:absolute;left:1578px;top:323px;width:8px;height:1px;background:repeating-linear-gradient(90deg,#4a7fb5 0 1px,transparent 1px 2px)"></div>
<svg style="position:absolute;left:1587px;top:315px" width="14" height="16"><path d="M.5 .5 H10 L13.5 4 V15.5 H.5 Z" fill="#fafafa" stroke="#c4c4c2"/><path d="M3 4.5 H9 M3 6.5 H11 M3 8.5 H11 M3 10.5 H11 M3 12.5 H11" stroke="#b5b5b3" stroke-width=".9"/></svg>
<div style="position:absolute;left:1606px;top:315px;white-space:pre;font-size:13.5px;line-height:17px;color:#141414;">src/kheops/layouts.d</div>
<div style="position:absolute;left:1578px;top:339px;width:8px;height:1px;background:repeating-linear-gradient(90deg,#4a7fb5 0 1px,transparent 1px 2px)"></div>
<svg style="position:absolute;left:1587px;top:331px" width="14" height="16"><path d="M.5 .5 H10 L13.5 4 V15.5 H.5 Z" fill="#fafafa" stroke="#c4c4c2"/><path d="M3 4.5 H9 M3 6.5 H11 M3 8.5 H11 M3 10.5 H11 M3 12.5 H11" stroke="#b5b5b3" stroke-width=".9"/></svg>
<div style="position:absolute;left:1606px;top:331px;white-space:pre;font-size:13.5px;line-height:17px;color:#141414;">src/kheops/pen.d</div>
<div style="position:absolute;left:1578px;top:355px;width:8px;height:1px;background:repeating-linear-gradient(90deg,#4a7fb5 0 1px,transparent 1px 2px)"></div>
<svg style="position:absolute;left:1587px;top:347px" width="14" height="16"><path d="M.5 .5 H10 L13.5 4 V15.5 H.5 Z" fill="#fafafa" stroke="#c4c4c2"/><path d="M3 4.5 H9 M3 6.5 H11 M3 8.5 H11 M3 10.5 H11 M3 12.5 H11" stroke="#b5b5b3" stroke-width=".9"/></svg>
<div style="position:absolute;left:1606px;top:347px;white-space:pre;font-size:13.5px;line-height:17px;color:#141414;">src/kheops/primitives.d</div>
<div style="position:absolute;left:1578px;top:371px;width:8px;height:1px;background:repeating-linear-gradient(90deg,#4a7fb5 0 1px,transparent 1px 2px)"></div>
<svg style="position:absolute;left:1587px;top:363px" width="14" height="16"><path d="M.5 .5 H10 L13.5 4 V15.5 H.5 Z" fill="#fafafa" stroke="#c4c4c2"/><path d="M3 4.5 H9 M3 6.5 H11 M3 8.5 H11 M3 10.5 H11 M3 12.5 H11" stroke="#b5b5b3" stroke-width=".9"/></svg>
<div style="position:absolute;left:1606px;top:363px;white-space:pre;font-size:13.5px;line-height:17px;color:#141414;">src/kheops/styles.d</div>
<div style="position:absolute;left:1578px;top:387px;width:8px;height:1px;background:repeating-linear-gradient(90deg,#4a7fb5 0 1px,transparent 1px 2px)"></div>
<svg style="position:absolute;left:1587px;top:379px" width="14" height="16"><path d="M.5 .5 H10 L13.5 4 V15.5 H.5 Z" fill="#fafafa" stroke="#c4c4c2"/><path d="M3 4.5 H9 M3 6.5 H11 M3 8.5 H11 M3 10.5 H11 M3 12.5 H11" stroke="#b5b5b3" stroke-width=".9"/></svg>
<div style="position:absolute;left:1606px;top:379px;white-space:pre;font-size:13.5px;line-height:17px;color:#141414;">src/kheops/timers.d</div>
<div style="position:absolute;left:1578px;top:403px;width:8px;height:1px;background:repeating-linear-gradient(90deg,#4a7fb5 0 1px,transparent 1px 2px)"></div>
<svg style="position:absolute;left:1587px;top:395px" width="14" height="16"><path d="M.5 .5 H10 L13.5 4 V15.5 H.5 Z" fill="#fafafa" stroke="#c4c4c2"/><path d="M3 4.5 H9 M3 6.5 H11 M3 8.5 H11 M3 10.5 H11 M3 12.5 H11" stroke="#b5b5b3" stroke-width=".9"/></svg>
<div style="position:absolute;left:1606px;top:395px;white-space:pre;font-size:13.5px;line-height:17px;color:#141414;">src/kheops/types.d</div>
<svg style="position:absolute;left:1570px;top:411px" width="18" height="18"><path d="M2.5 15.5 L10 8" stroke="#6b9ad6" stroke-width="4" stroke-linecap="round"/><path d="M9 4 A4 4 0 1 1 13.5 9.5 L12 7 L10.5 7.5 Z" fill="#b9b9b6" stroke="#888" stroke-width=".8"/></svg>
<div style="position:absolute;left:1591px;top:411px;white-space:pre;font-size:13.5px;line-height:17px;color:#141414;">Configurations</div>
<div style="position:absolute;left:1577px;top:428px;width:1px;height:24px;background:repeating-linear-gradient(#4a7fb5 0 1px,transparent 1px 2px)"></div>
<div style="position:absolute;left:1578px;top:435px;width:8px;height:1px;background:repeating-linear-gradient(90deg,#4a7fb5 0 1px,transparent 1px 2px)"></div>
<svg style="position:absolute;left:1586px;top:427px" width="17" height="17"><circle cx="8" cy="8.5" r="5.5" fill="none" stroke="#9a9a98" stroke-width="3" stroke-dasharray="2.2 1.5"/><circle cx="8" cy="8.5" r="4.5" fill="#c8c8c6" stroke="#8a8a88" stroke-width="1"/><circle cx="8" cy="8.5" r="2" fill="#fff" stroke="#8a8a88" stroke-width=".8"/><path d="M8 12 H12 V9.5 L16 13 L12 16.5 V14 H8 Z" fill="#7ec03b" stroke="#4f8a1c" stroke-width=".8"/></svg>
<div style="position:absolute;left:1606px;top:427px;white-space:pre;font-size:13.5px;line-height:17px;color:#141414;">debug (active)</div>
<div style="position:absolute;left:1578px;top:451px;width:8px;height:1px;background:repeating-linear-gradient(90deg,#4a7fb5 0 1px,transparent 1px 2px)"></div>
<svg style="position:absolute;left:1586px;top:443px" width="17" height="17"><circle cx="8" cy="8.5" r="5.5" fill="none" stroke="#9a9a98" stroke-width="3" stroke-dasharray="2.2 1.5"/><circle cx="8" cy="8.5" r="4.5" fill="#c8c8c6" stroke="#8a8a88" stroke-width="1"/><circle cx="8" cy="8.5" r="2" fill="#fff" stroke="#8a8a88" stroke-width=".8"/></svg>
<div style="position:absolute;left:1606px;top:443px;white-space:pre;font-size:13.5px;line-height:17px;color:#141414;">release</div>
<svg style="position:absolute;left:1738px;top:468px" width="3" height="8"><rect x="0" y="0" width="1" height="1" fill="#8a8983"/><rect x="0" y="3" width="1" height="1" fill="#8a8983"/><rect x="0" y="6" width="1" height="1" fill="#8a8983"/></svg>
<svg style="position:absolute;left:1561px;top:481px" width="345" height="6"><defs><pattern id="dp4" width="4" height="4" patternUnits="userSpaceOnUse"><rect x="0" y="0" width="1" height="1" fill="#85847e"/><rect x="2" y="0" width="1" height="1" fill="#eeede9"/><rect x="2" y="2" width="1" height="1" fill="#85847e"/><rect x="0" y="2" width="1" height="1" fill="#eeede9"/></pattern></defs><rect width="345" height="5" fill="url(#dp4)"/></svg>
<div style="position:absolute;left:1691px;top:476px;width:88px;height:16px;background:#e0dfd8"></div>
<div style="position:absolute;left:1694px;top:477px;white-space:pre;font-size:12.5px;line-height:15px;color:#141414;letter-spacing:0.45px">Project group</div>
<svg style="position:absolute;left:1908px;top:479px" width="11" height="11"><path d="M1.5 1.5 L9.5 9.5 M9.5 1.5 L1.5 9.5" stroke="#000" stroke-width="2.3"/></svg>
<div style="position:absolute;left:1559px;top:492px;width:361px;height:203px;background:#cfcec7"></div>
<svg style="position:absolute;left:1570px;top:502px" width="17" height="17"><path d="M1.5 1.5 H9 L13 5.5 V15.5 H1.5 Z" fill="#fbfbfb" stroke="#bdbdbb" stroke-width="1"/><circle cx="12" cy="13" r="3.6" fill="#5fb832" stroke="#3e8a1c" stroke-width=".8"/><path d="M10 13 H14 M12 11 V15" stroke="#fff" stroke-width="1.4"/></svg>
<svg style="position:absolute;left:1598px;top:502px" width="17" height="17"><path d="M1.5 1.5 H9 L13 5.5 V15.5 H1.5 Z" fill="#fbfbfb" stroke="#bdbdbb" stroke-width="1"/><circle cx="12" cy="13" r="3.6" fill="#f06a1f" stroke="#c54d10" stroke-width=".8"/><path d="M10 13 H14" stroke="#fff" stroke-width="1.4"/></svg>
<svg style="position:absolute;left:1625px;top:501px" width="17" height="18"><path d="M6 1.5 H11 V9 H15 L8.5 16 L2 9 H6 Z" fill="#6a6a68" stroke="#4a4a48" stroke-width=".8"/><rect x="7" y="2.5" width="3" height="3" fill="#aaa"/></svg>
<svg style="position:absolute;left:1653px;top:501px" width="17" height="18"><path d="M6 16.5 H11 V9 H15 L8.5 1.5 L2 9 H6 Z" fill="#49a3ec" stroke="#2a7ac2" stroke-width=".8"/><path d="M8.5 4 L12 8" stroke="#bfe0fa" stroke-width="1"/></svg>
<div style="position:absolute;left:1682px;top:500px;width:1px;height:20px;background:#b9b8b1;box-shadow:1px 0 0 #e6e5df"></div>
<svg style="position:absolute;left:1697px;top:502px" width="17" height="17"><path d="M3 2 V7 Q3 10 8.5 11 V16 M14 2 V7 Q14 10 8.5 11" fill="none" stroke="#5aa83a" stroke-width="2.6"/><path d="M1 4 L3 1.5 L5 4 M12 4 L14 1.5 L16 4" fill="none" stroke="#5aa83a" stroke-width="1.3"/></svg>
<div style="position:absolute;left:1565px;top:533px;width:350px;height:127px;background:#f8f8f7;border:1px solid #aaa9a3;border-radius:4px;box-sizing:border-box"></div>
<div style="position:absolute;left:1566px;top:534px;width:348px;height:19px;background:linear-gradient(#dcdbd5,#d1d0c9);border-bottom:1px solid #b5b4ad;border-radius:3px 3px 0 0"></div>
<div style="position:absolute;left:1571px;top:535px;white-space:pre;font-size:13.5px;line-height:17px;color:#141414;">Name</div>
<div style="position:absolute;left:1705px;top:535px;white-space:pre;font-size:13.5px;line-height:17px;color:#141414;">Type</div>
<div style="position:absolute;left:1745px;top:535px;white-space:pre;font-size:13.5px;line-height:17px;color:#141414;">Async</div>
<div style="position:absolute;left:1793px;top:535px;white-space:pre;font-size:13.5px;line-height:17px;color:#141414;">Configuration</div>
<div style="position:absolute;left:1699px;top:539px;width:1px;height:10px;background:repeating-linear-gradient(#666 0 1px,transparent 1px 2px)"></div>
<div style="position:absolute;left:1738px;top:539px;width:1px;height:10px;background:repeating-linear-gradient(#666 0 1px,transparent 1px 2px)"></div>
<div style="position:absolute;left:1787px;top:539px;width:1px;height:10px;background:repeating-linear-gradient(#666 0 1px,transparent 1px 2px)"></div>
<div style="position:absolute;left:1566px;top:553px;width:348px;height:21px;background:#f8f8f7"></div>
<div style="position:absolute;left:1566px;top:573px;width:348px;height:1px;background:repeating-linear-gradient(90deg,#222 0 1px,transparent 1px 2px)"></div>
<div style="position:absolute;left:1571px;top:554px;white-space:pre;font-size:13.5px;line-height:17px;color:#141414;">x11</div>
<div style="position:absolute;left:1705px;top:554px;white-space:pre;font-size:13.5px;line-height:17px;color:#141414;">DUB</div>
<div style="position:absolute;left:1745px;top:554px;white-space:pre;font-size:13.5px;line-height:17px;color:#141414;">async</div>
<div style="position:absolute;left:1793px;top:554px;white-space:pre;font-size:13.5px;line-height:17px;color:#141414;">release - library</div>
<div style="position:absolute;left:1566px;top:574px;width:348px;height:21px;background:#f0f0ec"></div>
<div style="position:absolute;left:1566px;top:594px;width:348px;height:1px;background:repeating-linear-gradient(90deg,#222 0 1px,transparent 1px 2px)"></div>
<div style="position:absolute;left:1571px;top:575px;white-space:pre;font-size:13.5px;line-height:17px;color:#141414;">imageformats.coedit</div>
<div style="position:absolute;left:1705px;top:575px;white-space:pre;font-size:13.5px;line-height:17px;color:#141414;">CE</div>
<div style="position:absolute;left:1745px;top:575px;white-space:pre;font-size:13.5px;line-height:17px;color:#141414;">async</div>
<div style="position:absolute;left:1793px;top:575px;white-space:pre;font-size:13.5px;line-height:17px;color:#141414;">release</div>
<div style="position:absolute;left:1566px;top:595px;width:348px;height:21px;background:#f8f8f7"></div>
<div style="position:absolute;left:1566px;top:615px;width:348px;height:1px;background:repeating-linear-gradient(90deg,#222 0 1px,transparent 1px 2px)"></div>
<div style="position:absolute;left:1571px;top:596px;white-space:pre;font-size:13.5px;line-height:17px;color:#141414;">iz.coedit</div>
<div style="position:absolute;left:1705px;top:596px;white-space:pre;font-size:13.5px;line-height:17px;color:#141414;">CE</div>
<div style="position:absolute;left:1745px;top:596px;white-space:pre;font-size:13.5px;line-height:17px;color:#141414;">async</div>
<div style="position:absolute;left:1793px;top:596px;white-space:pre;font-size:13.5px;line-height:17px;color:#141414;">release</div>
<div style="position:absolute;left:1566px;top:616px;width:348px;height:21px;background:linear-gradient(#e6f4fa,#b3d6e4);border:1px solid #8cb8cb;border-radius:3px;box-sizing:border-box"></div>
<div style="position:absolute;left:1571px;top:617px;white-space:pre;font-size:13.5px;line-height:17px;color:#141414;">kheops.ce</div>
<div style="position:absolute;left:1705px;top:617px;white-space:pre;font-size:13.5px;line-height:17px;color:#141414;">CE</div>
<div style="position:absolute;left:1745px;top:617px;white-space:pre;font-size:13.5px;line-height:17px;color:#141414;">wait</div>
<div style="position:absolute;left:1793px;top:617px;white-space:pre;font-size:13.5px;line-height:17px;color:#141414;">debug</div>
<div style="position:absolute;left:1699px;top:553px;width:1px;height:84px;background:repeating-linear-gradient(#222 0 1px,transparent 1px 2px)"></div>
<div style="position:absolute;left:1738px;top:553px;width:1px;height:84px;background:repeating-linear-gradient(#222 0 1px,transparent 1px 2px)"></div>
<div style="position:absolute;left:1787px;top:553px;width:1px;height:84px;background:repeating-linear-gradient(#222 0 1px,transparent 1px 2px)"></div>
<div style="position:absolute;left:1565px;top:668px;width:290px;height:19px;background:#cfcec7;border:1px solid #a8a7a0;border-top-color:#94938d;border-radius:4px"></div>
<div style="position:absolute;left:1567px;top:668px;white-space:pre;font-size:13.5px;line-height:17px;color:#141414;">No free standing project</div>
<svg style="position:absolute;left:1865px;top:671px" width="18" height="18"><path d="M2 16 L3.5 11 L13 1.5 L16.5 5 L7 14.5 Z" fill="#f2b33a" stroke="#b67a1a" stroke-width=".9"/><path d="M12 2.5 L15.5 6" stroke="#e0673a" stroke-width="2"/><path d="M2 16 L3 12.5 L5.5 15 Z" fill="#333"/></svg>
<svg style="position:absolute;left:1894px;top:672px" width="17" height="17"><path d="M1.5 1.5 H9 L13 5.5 V15.5 H1.5 Z" fill="#fbfbfb" stroke="#bdbdbb" stroke-width="1"/><circle cx="12" cy="13" r="3.6" fill="#5fb832" stroke="#3e8a1c" stroke-width=".8"/><path d="M10 13 H14 M12 11 V15" stroke="#fff" stroke-width="1.4"/></svg>
<svg style="position:absolute;left:1738px;top:697px" width="3" height="8"><rect x="0" y="0" width="1" height="1" fill="#8a8983"/><rect x="0" y="3" width="1" height="1" fill="#8a8983"/><rect x="0" y="6" width="1" height="1" fill="#8a8983"/></svg>
<svg style="position:absolute;left:1561px;top:709px" width="345" height="6"><defs><pattern id="dp5" width="4" height="4" patternUnits="userSpaceOnUse"><rect x="0" y="0" width="1" height="1" fill="#85847e"/><rect x="2" y="0" width="1" height="1" fill="#eeede9"/><rect x="2" y="2" width="1" height="1" fill="#85847e"/><rect x="0" y="2" width="1" height="1" fill="#eeede9"/></pattern></defs><rect width="345" height="5" fill="url(#dp5)"/></svg>
<div style="position:absolute;left:1697px;top:704px;width:76px;height:16px;background:#e0dfd8"></div>
<div style="position:absolute;left:1700px;top:704px;white-space:pre;font-size:12.5px;line-height:15px;color:#141414;letter-spacing:0.45px">Tools editor</div>
<svg style="position:absolute;left:1908px;top:707px" width="11" height="11"><path d="M1.5 1.5 L9.5 9.5 M9.5 1.5 L1.5 9.5" stroke="#000" stroke-width="2.3"/></svg>
<div style="position:absolute;left:1559px;top:720px;width:361px;height:330px;background:#cfcec7"></div>
<svg style="position:absolute;left:1569px;top:729px" width="18" height="18"><rect x="1" y="2" width="14" height="12" fill="#fff" stroke="#3c8fd8" stroke-width="1.3"/><rect x="1" y="2" width="14" height="3" fill="#8cc4f0"/><path d="M3.5 8 H6 M3.5 11 H6 M7 8 H12 M7 11 H12" stroke="#999" stroke-width="1"/><circle cx="13" cy="13" r="3.8" fill="#5fb832" stroke="#3e8a1c" stroke-width=".8"/><path d="M11 13 H15 M13 11 V15" stroke="#fff" stroke-width="1.4"/></svg>
<svg style="position:absolute;left:1597px;top:729px" width="18" height="18"><rect x="1" y="2" width="14" height="12" fill="#fff" stroke="#3c8fd8" stroke-width="1.3"/><rect x="1" y="2" width="14" height="3" fill="#8cc4f0"/><path d="M3.5 8 H6 M3.5 11 H6 M7 8 H12 M7 11 H12" stroke="#999" stroke-width="1"/><circle cx="13" cy="13" r="3.8" fill="#e23b32" stroke="#b3211a" stroke-width=".8"/><path d="M11 13 H15" stroke="#fff" stroke-width="1.4"/></svg>
<svg style="position:absolute;left:1625px;top:729px" width="17" height="18"><path d="M6 1.5 H11 V9 H15 L8.5 16.5 L2 9 H6 Z" fill="#49a3ec" stroke="#2a7ac2" stroke-width=".8"/></svg>
<svg style="position:absolute;left:1653px;top:729px" width="17" height="18"><path d="M6 16.5 H11 V9 H15 L8.5 1.5 L2 9 H6 Z" fill="#49a3ec" stroke="#2a7ac2" stroke-width=".8"/><path d="M8.5 4 L12 8" stroke="#bfe0fa" stroke-width="1"/></svg>
<svg style="position:absolute;left:1681px;top:729px" width="18" height="18"><rect x="1" y="1.5" width="12" height="10" fill="#fff" stroke="#3c8fd8" stroke-width="1.2"/><rect x="4.5" y="5.5" width="12" height="10" fill="#fff" stroke="#3c8fd8" stroke-width="1.2"/><rect x="4.5" y="5.5" width="12" height="2.5" fill="#8cc4f0"/></svg>
<div style="position:absolute;left:1711px;top:728px;width:1px;height:22px;background:#b9b8b1;box-shadow:1px 0 0 #e6e5df"></div>
<svg style="position:absolute;left:1725px;top:729px" width="18" height="18"><rect x="1" y="2" width="14" height="12" fill="#fff" stroke="#3c8fd8" stroke-width="1.3"/><rect x="1" y="2" width="14" height="3" fill="#8cc4f0"/><path d="M3.5 8 H6 M3.5 11 H6 M7 8 H12 M7 11 H12" stroke="#999" stroke-width="1"/><path d="M12 6 L9.5 12 H12 L10.5 17 L15.5 10 H13 L15 6 Z" fill="#f5b82e" stroke="#c98a10" stroke-width=".7"/></svg>
<div style="position:absolute;left:1564px;top:761px;width:281px;height:289px;background:#f8f8f7;border:1px solid #aaa9a3;border-radius:4px 4px 0 0;box-sizing:border-box"></div>
<div style="position:absolute;left:1569px;top:763px;white-space:pre;font-size:13.5px;line-height:17px;color:#141414;">Dolphin - this file dir</div>
<div style="position:absolute;left:1566px;top:782px;width:278px;height:20px;background:#f1f1ed"></div>
<div style="position:absolute;left:1569px;top:783px;white-space:pre;font-size:13.5px;line-height:17px;color:#141414;">Dolphin - this project dir</div>
<div style="position:absolute;left:1569px;top:803px;white-space:pre;font-size:13.5px;line-height:17px;color:#141414;">Konsole</div>
<div style="position:absolute;left:1566px;top:822px;width:278px;height:20px;background:#f1f1ed"></div>
<div style="position:absolute;left:1569px;top:823px;white-space:pre;font-size:13.5px;line-height:17px;color:#141414;">Konsole - this project path</div>
<div style="position:absolute;left:1565px;top:842px;width:279px;height:20px;background:linear-gradient(#e6f4fa,#b3d6e4);border:1px solid #8cb8cb;border-radius:3px;box-sizing:border-box"></div>
<div style="position:absolute;left:1569px;top:843px;white-space:pre;font-size:13.5px;line-height:17px;color:#141414;">Dscanner - this file</div>
<div style="position:absolute;left:1566px;top:862px;width:278px;height:20px;background:#f1f1ed"></div>
<div style="position:absolute;left:1569px;top:863px;white-space:pre;font-size:13.5px;line-height:17px;color:#141414;">Dscanner - this file no tests</div>
<div style="position:absolute;left:1569px;top:883px;white-space:pre;font-size:13.5px;line-height:17px;color:#141414;">Dscanner - this file AST</div>
<div style="position:absolute;left:1566px;top:902px;width:278px;height:20px;background:#f1f1ed"></div>
<div style="position:absolute;left:1569px;top:903px;white-space:pre;font-size:13.5px;line-height:17px;color:#141414;">Hmod - gen this project</div>
<div style="position:absolute;left:1569px;top:923px;white-space:pre;font-size:13.5px;line-height:17px;color:#141414;">Hmod - view this project</div>
<div style="position:absolute;left:1566px;top:942px;width:278px;height:20px;background:#f1f1ed"></div>
<div style="position:absolute;left:1569px;top:943px;white-space:pre;font-size:13.5px;line-height:17px;color:#141414;">Hmod - gen this in /docs</div>
<div style="position:absolute;left:1569px;top:963px;white-space:pre;font-size:13.5px;line-height:17px;color:#141414;">Hmod - view...</div>
<div style="position:absolute;left:1566px;top:982px;width:278px;height:20px;background:#f1f1ed"></div>
<div style="position:absolute;left:1569px;top:983px;white-space:pre;font-size:13.5px;line-height:17px;color:#141414;">Git GUI - this project</div>
<div style="position:absolute;left:1569px;top:1003px;white-space:pre;font-size:13.5px;line-height:17px;color:#141414;">Git GUI - Phobos</div>
<div style="position:absolute;left:1566px;top:1022px;width:278px;height:20px;background:#f1f1ed"></div>
<div style="position:absolute;left:1569px;top:1023px;white-space:pre;font-size:13.5px;line-height:17px;color:#141414;">symlist - as Json</div>
<div style="position:absolute;left:1569px;top:1043px;white-space:pre;font-size:13.5px;line-height:17px;color:#141414;">symlist - as text</div>
<div style="position:absolute;left:1565px;top:1046px;width:280px;height:4px;background:#cfcec7"></div>
<svg style="position:absolute;left:1846.5px;top:757px;overflow:visible" width="16" height="16"><g transform="translate(8 8)"><path d="M-4 2.0 L0 -2.0 L4 2.0" fill="none" stroke="#111" stroke-width="1.6"/></g></svg>
<div style="position:absolute;left:1848px;top:770px;width:13px;height:254px;background:#b4b3ac;border:1px solid #8e8d87;border-radius:4px;box-sizing:border-box"></div>
<svg style="position:absolute;left:1846.5px;top:1023px;overflow:visible" width="16" height="16"><g transform="translate(8 8)"><path d="M-4 2.0 L0 -2.0 L4 2.0" fill="none" stroke="#111" stroke-width="1.6"/></g></svg>
<svg style="position:absolute;left:1846.5px;top:1036px;overflow:visible" width="16" height="16"><g transform="translate(8 8)"><path d="M-4 -2.0 L0 2.0 L4 -2.0" fill="none" stroke="#111" stroke-width="1.6"/></g></svg>
<div style="position:absolute;left:1849px;top:772px;width:11px;height:210px;background:linear-gradient(90deg,#e8e7e2,#f6f6f3,#e2e1db);border:2px solid #7c7b76;border-radius:5px;box-sizing:border-box"></div>
<div style="position:absolute;left:1863px;top:761px;width:6px;height:289px;background:#e0dfd8"></div>
<div style="position:absolute;left:1869px;top:761px;width:22px;height:289px;background:#cac9c2"></div>
<div style="position:absolute;left:1891px;top:761px;width:1px;height:289px;background:#b3b09a"></div>
<div style="position:absolute;left:1893px;top:761px;width:2px;height:289px;background:#fff"></div>
<svg style="position:absolute;left:1870px;top:853px;overflow:visible" width="16" height="16"><g transform="translate(8 8)"><path d="M-1.75 -3.5 L1.75 0 L-1.75 3.5" fill="none" stroke="#111" stroke-width="1.6"/></g></svg>
<svg style="position:absolute;left:1899.5px;top:757px;overflow:visible" width="16" height="16"><g transform="translate(8 8)"><path d="M-4 2.0 L0 -2.0 L4 2.0" fill="none" stroke="#111" stroke-width="1.6"/></g></svg>
<div style="position:absolute;left:1901px;top:770px;width:13px;height:254px;background:#b4b3ac;border:1px solid #8e8d87;border-radius:4px;box-sizing:border-box"></div>
<svg style="position:absolute;left:1899.5px;top:1023px;overflow:visible" width="16" height="16"><g transform="translate(8 8)"><path d="M-4 2.0 L0 -2.0 L4 2.0" fill="none" stroke="#111" stroke-width="1.6"/></g></svg>
<svg style="position:absolute;left:1899.5px;top:1036px;overflow:visible" width="16" height="16"><g transform="translate(8 8)"><path d="M-4 -2.0 L0 2.0 L4 -2.0" fill="none" stroke="#111" stroke-width="1.6"/></g></svg>
<div style="position:absolute;left:1902px;top:772px;width:11px;height:250px;background:linear-gradient(90deg,#e8e7e2,#f6f6f3,#e2e1db);border:2px solid #7c7b76;border-radius:5px;box-sizing:border-box"></div>
<div style="position:absolute;left:291px;top:552px;width:1px;height:1px;background:#85847e"></div>
<div style="position:absolute;left:294px;top:552px;width:1px;height:1px;background:#85847e"></div>
<div style="position:absolute;left:297px;top:552px;width:1px;height:1px;background:#85847e"></div>
<div style="position:absolute;left:1552px;top:552px;width:1px;height:1px;background:#85847e"></div>
<div style="position:absolute;left:1555px;top:552px;width:1px;height:1px;background:#85847e"></div>
<div style="position:absolute;left:1558px;top:552px;width:1px;height:1px;background:#85847e"></div>
<div style="position:absolute;left:287px;top:84px;width:1px;height:570px;background:#f4f4f1"></div>
</body></html>
